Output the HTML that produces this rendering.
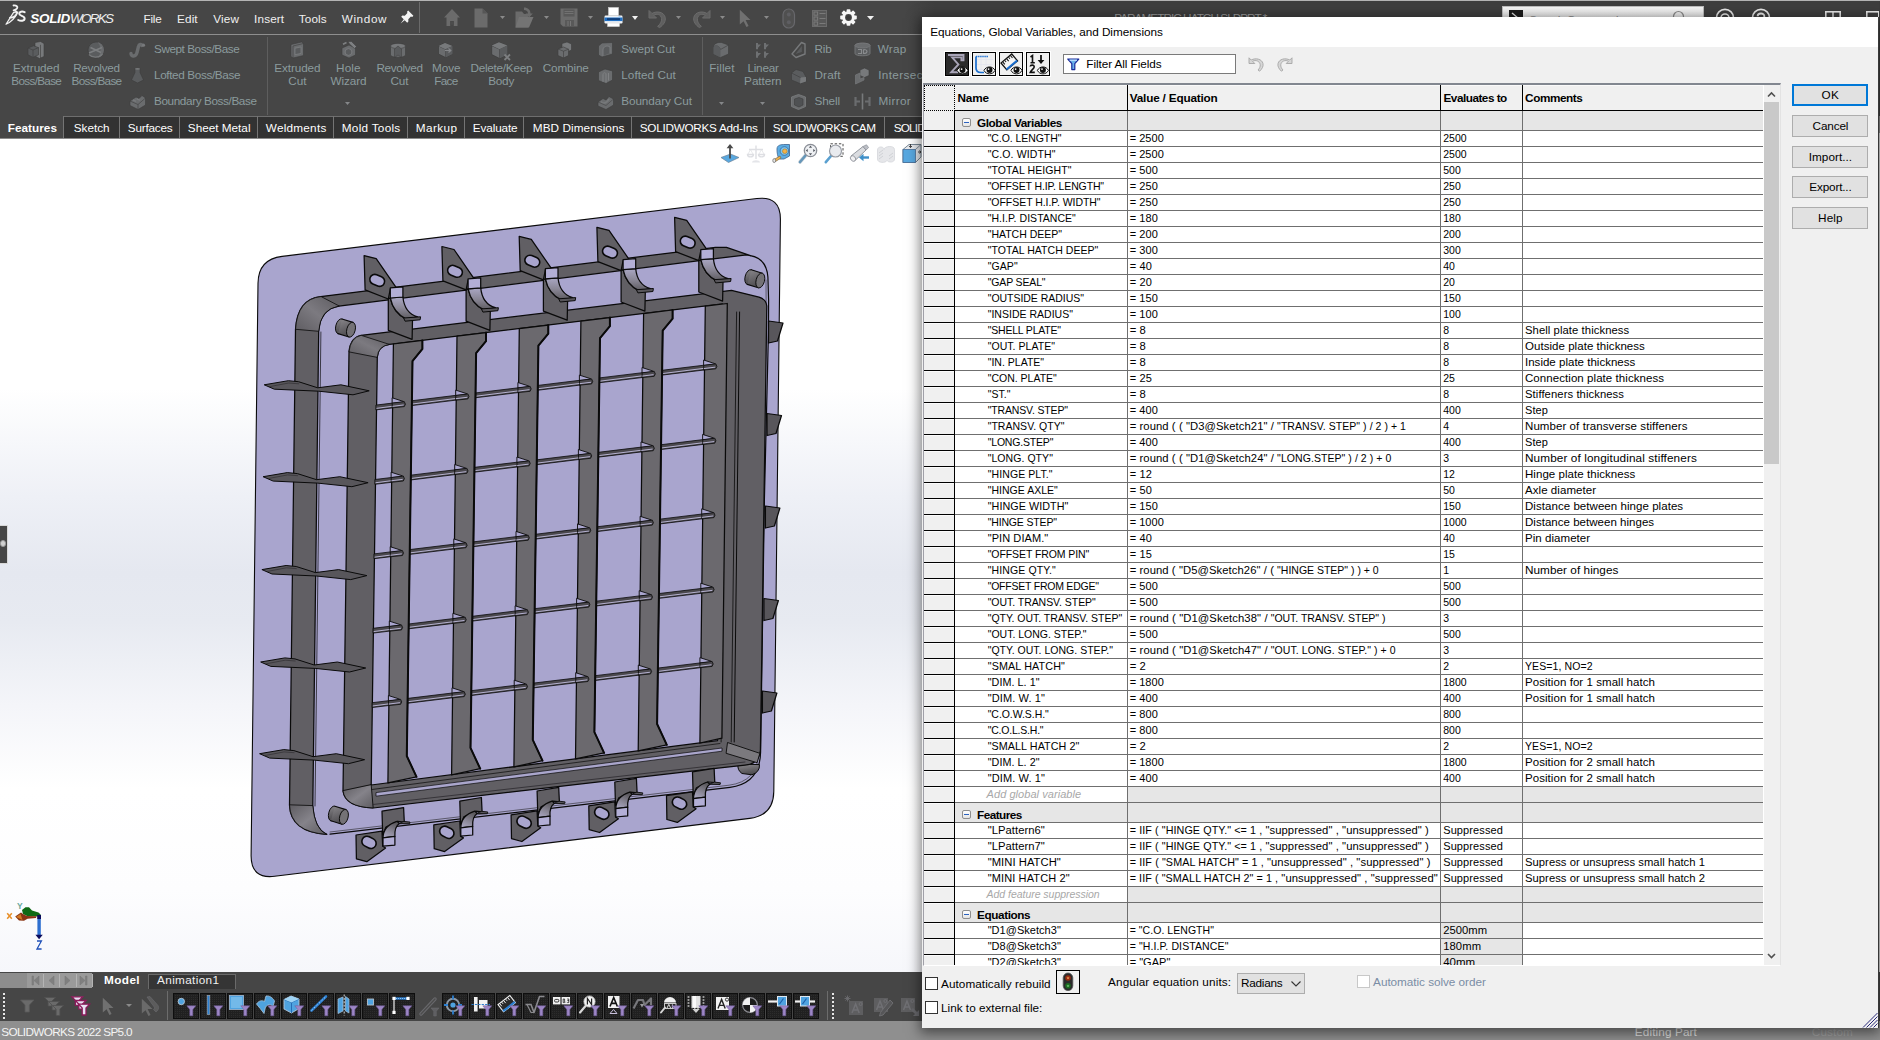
<!DOCTYPE html>
<html><head><meta charset="utf-8"><title>SOLIDWORKS</title><style>html,body{margin:0;padding:0}
body{width:1880px;height:1040px;overflow:hidden;position:relative;background:#464646;font-family:"Liberation Sans",sans-serif;}
.b{position:absolute;display:block}
.t{position:absolute;display:block;white-space:pre;line-height:1;font-family:"Liberation Sans",sans-serif;}
svg{overflow:visible}
</style></head><body>
<div class="b" style="left:0px;top:138px;width:1880px;height:835px;background:linear-gradient(to bottom,#ffffff 0%,#ffffff 30%,#eef0f6 43%,#e5e8f0 52%,#e7eaf1 58%,#f4f5f9 68%,#ffffff 78%,#fdfdfe 90%,#f6f7fb 100%);"></div>
<div class="b" style="left:0px;top:138px;width:1880px;height:1px;background:#8a8a8a;"></div>
<div class="b" style="left:0px;top:525px;width:8px;height:39px;background:#464646;border:1px solid #d8d8d8;border-left:none;box-sizing:border-box;"></div>
<div class="b" style="left:0px;top:540px;width:6px;height:7px;background:#d0d0d0;border-radius:4px;border:1px solid #9a9a9a;box-sizing:border-box;"></div>
<svg class="b" style="left:0;top:0" width="922" height="1040" viewBox="0 0 922 1040">
<defs>
<linearGradient id="armg" x1="0" y1="0" x2="0" y2="1"><stop offset="0" stop-color="#aaa7c4"/><stop offset="0.5" stop-color="#8a8796"/><stop offset="1" stop-color="#5c5a5f"/></linearGradient>
<linearGradient id="armg2" x1="0" y1="1" x2="0.5" y2="0"><stop offset="0" stop-color="#b0adca"/><stop offset="0.5" stop-color="#8a8796"/><stop offset="1" stop-color="#5c5a5f"/></linearGradient>
<linearGradient id="ping" x1="0" y1="0" x2="0.3" y2="1"><stop offset="0" stop-color="#8a888c"/><stop offset="0.5" stop-color="#6c6a6e"/><stop offset="1" stop-color="#4e4c50"/></linearGradient>
<linearGradient id="corng" x1="0" y1="1" x2="1" y2="0"><stop offset="0" stop-color="#5e5c61"/><stop offset="0.5" stop-color="#7c7a80"/><stop offset="1" stop-color="#5e5c61"/></linearGradient>
<linearGradient id="corng2" x1="0" y1="0" x2="1" y2="1"><stop offset="0" stop-color="#5e5c61"/><stop offset="0.5" stop-color="#85838a"/><stop offset="1" stop-color="#5e5c61"/></linearGradient>
</defs>
<path d="M258 283.3 Q258.3 259.3 282.1 256.4 L756.9 198.5 Q780.7 195.6 780.4 219.6 L773.8 791.5 Q773.5 815.5 749.7 818.4 L274.6 876.3 Q250.8 879.2 251.1 855.2 Z" fill="#a9a5ce" stroke="#0a0a0a" stroke-width="1.1" stroke-linejoin="round" stroke-linecap="round" />
<path d="M750.4 255.6 Q766.5 258.5 767.9 277 L768.6 300 L768.5 330 L764.4 500 L760.6 752 Q760 783.5 730 787.3 L330 834.2" fill="none" stroke="#0a0a0a" stroke-width="1.2" stroke-linejoin="round" stroke-linecap="round" />
<path d="M766 280 L766.3 330 L762.3 500 L758.6 752 Q758 781.5 729 785.2 L330 832" fill="none" stroke="#3a3840" stroke-width="0.7" stroke-linejoin="round" stroke-linecap="round" />
<path d="M320.7 296.6 Q297.5 299 295.5 329.3 L289.5 805.2 Q290.5 832 326.8 834.4 Q314.5 829 312.8 806 L318.7 331.3 Q320.2 309 338.9 306.1 L715.4 258.6 L746.5 254.9 L750.4 255.6 L726.5 247.4 L715.4 247.3 Z" fill="#615f64" stroke="#0a0a0a" stroke-width="1.25" stroke-linejoin="round" stroke-linecap="round" />
<path d="M320.7 296.6 Q297.5 299 295.5 329.3 L318.7 331.3 Q320.2 309 338.9 306.1 Z" fill="url(#corng)" stroke="#0a0a0a" stroke-width="0.8" stroke-linejoin="round" stroke-linecap="round" />
<path d="M289.5 805.2 Q290.5 832 326.8 834.4 Q314.5 829 312.8 806 Z" fill="url(#corng2)" stroke="#0a0a0a" stroke-width="0.8" stroke-linejoin="round" stroke-linecap="round" />
<polyline points="320.9,332 315,806" fill="none" stroke="#0a0a0a" stroke-width="0.7" stroke-linecap="round"/>
<path d="M738 764.5 Q737 770 742 773.5 L752 774.8 Q760 772 759.5 765 Z" fill="url(#ping)" stroke="#0a0a0a" stroke-width="1.0" stroke-linejoin="round" stroke-linecap="round" />
<path d="M349 351.5 Q350.5 337.5 361.1 335.3 L731.5 290.3 L759 297.2 Q766 299 766.8 306 L760.4 750.6 Q759 764 745 765.2 L718 768.1 L373.2 808 Q345 807 343 791 Z" fill="#615f64" stroke="#0a0a0a" stroke-width="1.25" stroke-linejoin="round" stroke-linecap="round" />
<path d="M377.3 357 Q378 346 389.4 344.4 L722.5 303.9 L717.5 740.7 L371.2 785 Z" fill="#a9a5ce" stroke="#0a0a0a" stroke-width="1.25" stroke-linejoin="round" stroke-linecap="round" />
<path d="M349 351.5 Q350.5 337.5 361.1 335.3 L389.4 344.4 Q378 346 377.3 357 Z" fill="url(#corng)" stroke="#0a0a0a" stroke-width="0.8" stroke-linejoin="round" stroke-linecap="round" />
<path d="M343 791 Q345 807 373.2 808 L371.2 785 Z" fill="url(#corng2)" stroke="#0a0a0a" stroke-width="0.9" stroke-linejoin="round" stroke-linecap="round" />
<polygon points="727.5,742.5 759.8,753.3 757.1,762.7 726.1,753.3" fill="#7b797e" stroke="#0a0a0a" stroke-width="0.9" stroke-linejoin="round" />
<polyline points="726.5,312 721.1,742" fill="none" stroke="#0a0a0a" stroke-width="0.8" stroke-linecap="round"/>
<polyline points="736.6,312 731.2,742" fill="none" stroke="#0a0a0a" stroke-width="0.8" stroke-linecap="round"/>
<polyline points="739.6,312 734.2,742" fill="none" stroke="#0a0a0a" stroke-width="1.0" stroke-linecap="round"/>
<polygon points="376,792.6 722,748 722,751.2 376,796.2" fill="#aaa6cc" stroke="#0a0a0a" stroke-width="0.7" stroke-linejoin="round" />
<polyline points="372,789.5 720,743.5" fill="none" stroke="#0a0a0a" stroke-width="0.7" stroke-linecap="round"/>
<polyline points="373,804.5 745,762" fill="none" stroke="#2c2a2e" stroke-width="0.8" stroke-linecap="round"/>
<polygon points="264.2,384.8 288.4,380.7 298.5,381.7 317.7,387.8 340.9,384.8 369.2,390.8 353,394.8 318.7,391.2 274.3,389.2" fill="#58565b" stroke="#0a0a0a" stroke-width="1.0" stroke-linejoin="round" />
<polyline points="269.7,386.6 288.7,383 298.7,383.8" fill="none" stroke="#2a282c" stroke-width="0.6" stroke-linecap="round"/>
<polygon points="263.1,476.7 287.3,472.6 297.4,473.6 316.6,479.7 339.8,476.7 368.1,482.7 351.9,486.7 317.6,483.1 273.2,481.1" fill="#58565b" stroke="#0a0a0a" stroke-width="1.0" stroke-linejoin="round" />
<polyline points="268.6,478.5 287.6,474.9 297.6,475.7" fill="none" stroke="#2a282c" stroke-width="0.6" stroke-linecap="round"/>
<polygon points="261.9,569.6 286.1,565.5 296.2,566.5 315.4,572.6 338.6,569.6 366.9,575.6 350.7,579.6 316.4,576 272,574" fill="#58565b" stroke="#0a0a0a" stroke-width="1.0" stroke-linejoin="round" />
<polyline points="267.4,571.4 286.4,567.8 296.4,568.6" fill="none" stroke="#2a282c" stroke-width="0.6" stroke-linecap="round"/>
<polygon points="260.7,662 284.9,657.9 295,658.9 314.2,665 337.4,662 365.7,668 349.5,672 315.2,668.4 270.8,666.4" fill="#58565b" stroke="#0a0a0a" stroke-width="1.0" stroke-linejoin="round" />
<polyline points="266.2,663.8 285.2,660.2 295.2,661" fill="none" stroke="#2a282c" stroke-width="0.6" stroke-linecap="round"/>
<polygon points="259.6,753.7 283.8,749.6 293.9,750.6 313.1,756.7 336.3,753.7 364.6,759.7 348.4,763.7 314.1,760.1 269.7,758.1" fill="#58565b" stroke="#0a0a0a" stroke-width="1.0" stroke-linejoin="round" />
<polyline points="265.1,755.5 284.1,751.9 294.1,752.7" fill="none" stroke="#2a282c" stroke-width="0.6" stroke-linecap="round"/>
<polygon points="375.9,405.1 404.8,401.6 405.6,404.1 404.8,406.4 375.9,409.9" fill="#4a484d" stroke="#0a0a0a" stroke-width="0.8" stroke-linejoin="round" />
<polyline points="376.9,408.3 403.8,404.8" fill="none" stroke="#b5b1d0" stroke-width="1.0" stroke-linecap="round"/>
<polygon points="409.8,401 468.4,393.8 469.2,396.3 468.4,398.6 409.8,405.8" fill="#4a484d" stroke="#0a0a0a" stroke-width="0.8" stroke-linejoin="round" />
<polyline points="410.8,404.2 467.4,397" fill="none" stroke="#b5b1d0" stroke-width="1.0" stroke-linecap="round"/>
<polygon points="473.4,393.2 530.6,386.3 531.4,388.8 530.6,391.1 473.4,398" fill="#4a484d" stroke="#0a0a0a" stroke-width="0.8" stroke-linejoin="round" />
<polyline points="474.4,396.4 529.6,389.5" fill="none" stroke="#b5b1d0" stroke-width="1.0" stroke-linecap="round"/>
<polygon points="535.6,385.7 592.1,378.8 592.9,381.3 592.1,383.6 535.6,390.5" fill="#4a484d" stroke="#0a0a0a" stroke-width="0.8" stroke-linejoin="round" />
<polyline points="536.6,388.9 591.1,382" fill="none" stroke="#b5b1d0" stroke-width="1.0" stroke-linecap="round"/>
<polygon points="597.1,378.2 654.7,371.2 655.5,373.7 654.7,376 597.1,383" fill="#4a484d" stroke="#0a0a0a" stroke-width="0.8" stroke-linejoin="round" />
<polyline points="598.1,381.4 653.7,374.4" fill="none" stroke="#b5b1d0" stroke-width="1.0" stroke-linecap="round"/>
<polygon points="659.7,370.6 716.3,363.7 717.1,366.2 716.3,368.5 659.7,375.4" fill="#4a484d" stroke="#0a0a0a" stroke-width="0.8" stroke-linejoin="round" />
<polyline points="660.7,373.8 715.3,366.9" fill="none" stroke="#b5b1d0" stroke-width="1.0" stroke-linecap="round"/>
<polygon points="374.9,479.5 403.8,476 404.6,478.5 403.8,480.8 374.9,484.3" fill="#4a484d" stroke="#0a0a0a" stroke-width="0.8" stroke-linejoin="round" />
<polyline points="375.9,482.7 402.8,479.2" fill="none" stroke="#b5b1d0" stroke-width="1.0" stroke-linecap="round"/>
<polygon points="408.8,475.4 467.4,468.3 468.2,470.8 467.4,473.1 408.8,480.2" fill="#4a484d" stroke="#0a0a0a" stroke-width="0.8" stroke-linejoin="round" />
<polyline points="409.8,478.6 466.4,471.5" fill="none" stroke="#b5b1d0" stroke-width="1.0" stroke-linecap="round"/>
<polygon points="472.4,467.6 529.6,460.7 530.4,463.2 529.6,465.5 472.4,472.4" fill="#4a484d" stroke="#0a0a0a" stroke-width="0.8" stroke-linejoin="round" />
<polyline points="473.4,470.8 528.6,463.9" fill="none" stroke="#b5b1d0" stroke-width="1.0" stroke-linecap="round"/>
<polygon points="534.6,460.1 591.1,453.2 591.9,455.7 591.1,458 534.6,464.9" fill="#4a484d" stroke="#0a0a0a" stroke-width="0.8" stroke-linejoin="round" />
<polyline points="535.6,463.3 590.1,456.4" fill="none" stroke="#b5b1d0" stroke-width="1.0" stroke-linecap="round"/>
<polygon points="596.1,452.6 653.7,445.6 654.5,448.1 653.7,450.4 596.1,457.4" fill="#4a484d" stroke="#0a0a0a" stroke-width="0.8" stroke-linejoin="round" />
<polyline points="597.1,455.8 652.7,448.8" fill="none" stroke="#b5b1d0" stroke-width="1.0" stroke-linecap="round"/>
<polygon points="658.7,445 715.3,438.1 716.1,440.6 715.3,442.9 658.7,449.8" fill="#4a484d" stroke="#0a0a0a" stroke-width="0.8" stroke-linejoin="round" />
<polyline points="659.7,448.2 714.3,441.3" fill="none" stroke="#b5b1d0" stroke-width="1.0" stroke-linecap="round"/>
<polygon points="374,553.9 402.9,550.4 403.7,552.9 402.9,555.2 374,558.7" fill="#4a484d" stroke="#0a0a0a" stroke-width="0.8" stroke-linejoin="round" />
<polyline points="375,557.1 401.9,553.6" fill="none" stroke="#b5b1d0" stroke-width="1.0" stroke-linecap="round"/>
<polygon points="407.9,549.8 466.5,542.7 467.3,545.2 466.5,547.5 407.9,554.6" fill="#4a484d" stroke="#0a0a0a" stroke-width="0.8" stroke-linejoin="round" />
<polyline points="408.9,553 465.5,545.9" fill="none" stroke="#b5b1d0" stroke-width="1.0" stroke-linecap="round"/>
<polygon points="471.5,542.1 528.7,535.1 529.5,537.6 528.7,539.9 471.5,546.9" fill="#4a484d" stroke="#0a0a0a" stroke-width="0.8" stroke-linejoin="round" />
<polyline points="472.5,545.3 527.7,538.3" fill="none" stroke="#b5b1d0" stroke-width="1.0" stroke-linecap="round"/>
<polygon points="533.7,534.5 590.2,527.6 591,530.1 590.2,532.4 533.7,539.3" fill="#4a484d" stroke="#0a0a0a" stroke-width="0.8" stroke-linejoin="round" />
<polyline points="534.7,537.7 589.2,530.8" fill="none" stroke="#b5b1d0" stroke-width="1.0" stroke-linecap="round"/>
<polygon points="595.2,527 652.8,520 653.6,522.5 652.8,524.8 595.2,531.8" fill="#4a484d" stroke="#0a0a0a" stroke-width="0.8" stroke-linejoin="round" />
<polyline points="596.2,530.2 651.8,523.2" fill="none" stroke="#b5b1d0" stroke-width="1.0" stroke-linecap="round"/>
<polygon points="657.8,519.4 714.4,512.5 715.2,515 714.4,517.3 657.8,524.2" fill="#4a484d" stroke="#0a0a0a" stroke-width="0.8" stroke-linejoin="round" />
<polyline points="658.8,522.6 713.4,515.7" fill="none" stroke="#b5b1d0" stroke-width="1.0" stroke-linecap="round"/>
<polygon points="373.1,628.3 402,624.8 402.8,627.3 402,629.6 373.1,633.1" fill="#4a484d" stroke="#0a0a0a" stroke-width="0.8" stroke-linejoin="round" />
<polyline points="374.1,631.5 401,628" fill="none" stroke="#b5b1d0" stroke-width="1.0" stroke-linecap="round"/>
<polygon points="407,624.2 465.6,617.1 466.4,619.6 465.6,621.9 407,629" fill="#4a484d" stroke="#0a0a0a" stroke-width="0.8" stroke-linejoin="round" />
<polyline points="408,627.4 464.6,620.3" fill="none" stroke="#b5b1d0" stroke-width="1.0" stroke-linecap="round"/>
<polygon points="470.6,616.5 527.8,609.5 528.6,612 527.8,614.3 470.6,621.3" fill="#4a484d" stroke="#0a0a0a" stroke-width="0.8" stroke-linejoin="round" />
<polyline points="471.6,619.7 526.8,612.7" fill="none" stroke="#b5b1d0" stroke-width="1.0" stroke-linecap="round"/>
<polygon points="532.8,608.9 589.3,602.1 590.1,604.6 589.3,606.9 532.8,613.7" fill="#4a484d" stroke="#0a0a0a" stroke-width="0.8" stroke-linejoin="round" />
<polyline points="533.8,612.1 588.3,605.3" fill="none" stroke="#b5b1d0" stroke-width="1.0" stroke-linecap="round"/>
<polygon points="594.3,601.4 651.9,594.4 652.7,596.9 651.9,599.2 594.3,606.2" fill="#4a484d" stroke="#0a0a0a" stroke-width="0.8" stroke-linejoin="round" />
<polyline points="595.3,604.6 650.9,597.6" fill="none" stroke="#b5b1d0" stroke-width="1.0" stroke-linecap="round"/>
<polygon points="656.9,593.8 713.5,587 714.3,589.5 713.5,591.8 656.9,598.6" fill="#4a484d" stroke="#0a0a0a" stroke-width="0.8" stroke-linejoin="round" />
<polyline points="657.9,597 712.5,590.2" fill="none" stroke="#b5b1d0" stroke-width="1.0" stroke-linecap="round"/>
<polygon points="372.2,702.7 401.1,699.2 401.9,701.7 401.1,704 372.2,707.5" fill="#4a484d" stroke="#0a0a0a" stroke-width="0.8" stroke-linejoin="round" />
<polyline points="373.2,705.9 400.1,702.4" fill="none" stroke="#b5b1d0" stroke-width="1.0" stroke-linecap="round"/>
<polygon points="406.1,698.6 464.7,691.5 465.5,694 464.7,696.3 406.1,703.4" fill="#4a484d" stroke="#0a0a0a" stroke-width="0.8" stroke-linejoin="round" />
<polyline points="407.1,701.8 463.7,694.7" fill="none" stroke="#b5b1d0" stroke-width="1.0" stroke-linecap="round"/>
<polygon points="469.7,690.9 526.9,683.9 527.7,686.4 526.9,688.7 469.7,695.7" fill="#4a484d" stroke="#0a0a0a" stroke-width="0.8" stroke-linejoin="round" />
<polyline points="470.7,694.1 525.9,687.1" fill="none" stroke="#b5b1d0" stroke-width="1.0" stroke-linecap="round"/>
<polygon points="531.9,683.3 588.4,676.5 589.2,679 588.4,681.3 531.9,688.1" fill="#4a484d" stroke="#0a0a0a" stroke-width="0.8" stroke-linejoin="round" />
<polyline points="532.9,686.5 587.4,679.7" fill="none" stroke="#b5b1d0" stroke-width="1.0" stroke-linecap="round"/>
<polygon points="593.4,675.9 651,668.9 651.8,671.4 651,673.7 593.4,680.7" fill="#4a484d" stroke="#0a0a0a" stroke-width="0.8" stroke-linejoin="round" />
<polyline points="594.4,679.1 650,672.1" fill="none" stroke="#b5b1d0" stroke-width="1.0" stroke-linecap="round"/>
<polygon points="656,668.3 712.6,661.4 713.4,663.9 712.6,666.2 656,673.1" fill="#4a484d" stroke="#0a0a0a" stroke-width="0.8" stroke-linejoin="round" />
<polyline points="657,671.5 711.6,664.6" fill="none" stroke="#b5b1d0" stroke-width="1.0" stroke-linecap="round"/>
<polygon points="393.4,344 422.4,340.4 422.4,349 412.5,361 406.8,756 416.5,776.8 387.9,782.9" fill="#6b696e" stroke="#0a0a0a" stroke-width="1.25" stroke-linejoin="round" />
<polyline points="422.4,340.4 422.4,349 412.5,361 406.8,756 416.5,776.8" fill="none" stroke="#0a0a0a" stroke-width="2.0" stroke-linecap="round"/>
<polygon points="392.1,397.8 403.3,401.4 403.3,402 392.1,403.3" fill="#a9a5ce" stroke="#0a0a0a" stroke-width="0.9" stroke-linejoin="round" />
<polygon points="392.2,403.1 404.3,401.6 405.4,404.2 404.3,406.6 392.2,407.9" fill="#4a484d" stroke="#0a0a0a" stroke-width="0.8" stroke-linejoin="round" />
<polyline points="392.8,406.3 403.3,405" fill="none" stroke="#b5b1d0" stroke-width="1.0" stroke-linecap="round"/>
<polygon points="391.1,472.2 402.3,475.8 402.3,476.4 391.1,477.7" fill="#a9a5ce" stroke="#0a0a0a" stroke-width="0.9" stroke-linejoin="round" />
<polygon points="391.2,477.5 403.3,476 404.4,478.6 403.3,481 391.2,482.3" fill="#4a484d" stroke="#0a0a0a" stroke-width="0.8" stroke-linejoin="round" />
<polyline points="391.8,480.7 402.3,479.4" fill="none" stroke="#b5b1d0" stroke-width="1.0" stroke-linecap="round"/>
<polygon points="390.2,546.7 401.4,550.3 401.4,550.9 390.2,552.2" fill="#a9a5ce" stroke="#0a0a0a" stroke-width="0.9" stroke-linejoin="round" />
<polygon points="390.3,552 402.4,550.5 403.5,553.1 402.4,555.5 390.3,556.8" fill="#4a484d" stroke="#0a0a0a" stroke-width="0.8" stroke-linejoin="round" />
<polyline points="390.9,555.2 401.4,553.9" fill="none" stroke="#b5b1d0" stroke-width="1.0" stroke-linecap="round"/>
<polygon points="389.3,621.1 400.5,624.7 400.5,625.3 389.3,626.6" fill="#a9a5ce" stroke="#0a0a0a" stroke-width="0.9" stroke-linejoin="round" />
<polygon points="389.4,626.4 401.5,624.9 402.6,627.5 401.5,629.9 389.4,631.2" fill="#4a484d" stroke="#0a0a0a" stroke-width="0.8" stroke-linejoin="round" />
<polyline points="390,629.6 400.5,628.3" fill="none" stroke="#b5b1d0" stroke-width="1.0" stroke-linecap="round"/>
<polygon points="388.4,695.5 399.6,699.1 399.6,699.7 388.4,701" fill="#a9a5ce" stroke="#0a0a0a" stroke-width="0.9" stroke-linejoin="round" />
<polygon points="388.5,700.8 400.6,699.3 401.7,701.9 400.6,704.3 388.5,705.6" fill="#4a484d" stroke="#0a0a0a" stroke-width="0.8" stroke-linejoin="round" />
<polyline points="389.1,704 399.6,702.7" fill="none" stroke="#b5b1d0" stroke-width="1.0" stroke-linecap="round"/>
<polygon points="457,336.2 486,332.6 486,341.2 476.1,353.2 470.5,747.9 480.2,768.7 451.6,774.8" fill="#6b696e" stroke="#0a0a0a" stroke-width="1.25" stroke-linejoin="round" />
<polyline points="486,332.6 486,341.2 476.1,353.2 470.5,747.9 480.2,768.7" fill="none" stroke="#0a0a0a" stroke-width="2.0" stroke-linecap="round"/>
<polygon points="455.7,390.1 466.9,393.7 466.9,394.3 455.7,395.6" fill="#a9a5ce" stroke="#0a0a0a" stroke-width="0.9" stroke-linejoin="round" />
<polygon points="455.8,395.4 467.9,393.9 469,396.5 467.9,398.9 455.8,400.2" fill="#4a484d" stroke="#0a0a0a" stroke-width="0.8" stroke-linejoin="round" />
<polyline points="456.4,398.6 466.9,397.3" fill="none" stroke="#b5b1d0" stroke-width="1.0" stroke-linecap="round"/>
<polygon points="454.7,464.5 465.9,468.1 465.9,468.7 454.7,470" fill="#a9a5ce" stroke="#0a0a0a" stroke-width="0.9" stroke-linejoin="round" />
<polygon points="454.8,469.8 466.9,468.3 468,470.9 466.9,473.3 454.8,474.6" fill="#4a484d" stroke="#0a0a0a" stroke-width="0.8" stroke-linejoin="round" />
<polyline points="455.4,473 465.9,471.7" fill="none" stroke="#b5b1d0" stroke-width="1.0" stroke-linecap="round"/>
<polygon points="453.8,538.9 465,542.5 465,543.1 453.8,544.4" fill="#a9a5ce" stroke="#0a0a0a" stroke-width="0.9" stroke-linejoin="round" />
<polygon points="453.9,544.2 466,542.7 467.1,545.3 466,547.7 453.9,549" fill="#4a484d" stroke="#0a0a0a" stroke-width="0.8" stroke-linejoin="round" />
<polyline points="454.5,547.4 465,546.1" fill="none" stroke="#b5b1d0" stroke-width="1.0" stroke-linecap="round"/>
<polygon points="452.9,613.3 464.1,616.9 464.1,617.5 452.9,618.8" fill="#a9a5ce" stroke="#0a0a0a" stroke-width="0.9" stroke-linejoin="round" />
<polygon points="453,618.6 465.1,617.1 466.2,619.7 465.1,622.1 453,623.4" fill="#4a484d" stroke="#0a0a0a" stroke-width="0.8" stroke-linejoin="round" />
<polyline points="453.6,621.8 464.1,620.5" fill="none" stroke="#b5b1d0" stroke-width="1.0" stroke-linecap="round"/>
<polygon points="452,687.8 463.2,691.4 463.2,692 452,693.3" fill="#a9a5ce" stroke="#0a0a0a" stroke-width="0.9" stroke-linejoin="round" />
<polygon points="452.1,693.1 464.2,691.6 465.3,694.2 464.2,696.6 452.1,697.9" fill="#4a484d" stroke="#0a0a0a" stroke-width="0.8" stroke-linejoin="round" />
<polyline points="452.7,696.3 463.2,695" fill="none" stroke="#b5b1d0" stroke-width="1.0" stroke-linecap="round"/>
<polygon points="519.3,328.7 548.3,325.1 548.3,333.7 538.4,345.7 532.8,739.9 542.5,760.7 513.9,766.8" fill="#6b696e" stroke="#0a0a0a" stroke-width="1.25" stroke-linejoin="round" />
<polyline points="548.3,325.1 548.3,333.7 538.4,345.7 532.8,739.9 542.5,760.7" fill="none" stroke="#0a0a0a" stroke-width="2.0" stroke-linecap="round"/>
<polygon points="517.9,382.5 529.1,386.1 529.1,386.7 517.9,388" fill="#a9a5ce" stroke="#0a0a0a" stroke-width="0.9" stroke-linejoin="round" />
<polygon points="518,387.8 530.1,386.3 531.2,388.9 530.1,391.3 518,392.6" fill="#4a484d" stroke="#0a0a0a" stroke-width="0.8" stroke-linejoin="round" />
<polyline points="518.6,391 529.1,389.7" fill="none" stroke="#b5b1d0" stroke-width="1.0" stroke-linecap="round"/>
<polygon points="516.9,457 528.1,460.6 528.1,461.2 516.9,462.5" fill="#a9a5ce" stroke="#0a0a0a" stroke-width="0.9" stroke-linejoin="round" />
<polygon points="517,462.3 529.1,460.8 530.2,463.4 529.1,465.8 517,467.1" fill="#4a484d" stroke="#0a0a0a" stroke-width="0.8" stroke-linejoin="round" />
<polyline points="517.6,465.5 528.1,464.2" fill="none" stroke="#b5b1d0" stroke-width="1.0" stroke-linecap="round"/>
<polygon points="516,531.4 527.2,535 527.2,535.6 516,536.9" fill="#a9a5ce" stroke="#0a0a0a" stroke-width="0.9" stroke-linejoin="round" />
<polygon points="516.1,536.7 528.2,535.2 529.3,537.8 528.2,540.2 516.1,541.5" fill="#4a484d" stroke="#0a0a0a" stroke-width="0.8" stroke-linejoin="round" />
<polyline points="516.7,539.9 527.2,538.6" fill="none" stroke="#b5b1d0" stroke-width="1.0" stroke-linecap="round"/>
<polygon points="515.1,605.8 526.3,609.4 526.3,610 515.1,611.3" fill="#a9a5ce" stroke="#0a0a0a" stroke-width="0.9" stroke-linejoin="round" />
<polygon points="515.2,611.1 527.3,609.6 528.4,612.2 527.3,614.6 515.2,615.9" fill="#4a484d" stroke="#0a0a0a" stroke-width="0.8" stroke-linejoin="round" />
<polyline points="515.8,614.3 526.3,613" fill="none" stroke="#b5b1d0" stroke-width="1.0" stroke-linecap="round"/>
<polygon points="514.2,680.2 525.4,683.8 525.4,684.4 514.2,685.7" fill="#a9a5ce" stroke="#0a0a0a" stroke-width="0.9" stroke-linejoin="round" />
<polygon points="514.3,685.5 526.4,684 527.5,686.6 526.4,689 514.3,690.3" fill="#4a484d" stroke="#0a0a0a" stroke-width="0.8" stroke-linejoin="round" />
<polyline points="514.9,688.7 525.4,687.4" fill="none" stroke="#b5b1d0" stroke-width="1.0" stroke-linecap="round"/>
<polygon points="580.9,321.2 609.9,317.6 609.9,326.2 600,338.2 594.4,732.1 604.1,752.9 575.5,758.9" fill="#6b696e" stroke="#0a0a0a" stroke-width="1.25" stroke-linejoin="round" />
<polyline points="609.9,317.6 609.9,326.2 600,338.2 594.4,732.1 604.1,752.9" fill="none" stroke="#0a0a0a" stroke-width="2.0" stroke-linecap="round"/>
<polygon points="579.4,375.1 590.6,378.7 590.6,379.3 579.4,380.6" fill="#a9a5ce" stroke="#0a0a0a" stroke-width="0.9" stroke-linejoin="round" />
<polygon points="579.5,380.4 591.6,378.9 592.7,381.5 591.6,383.9 579.5,385.2" fill="#4a484d" stroke="#0a0a0a" stroke-width="0.8" stroke-linejoin="round" />
<polyline points="580.1,383.6 590.6,382.3" fill="none" stroke="#b5b1d0" stroke-width="1.0" stroke-linecap="round"/>
<polygon points="578.4,449.5 589.6,453.1 589.6,453.7 578.4,455" fill="#a9a5ce" stroke="#0a0a0a" stroke-width="0.9" stroke-linejoin="round" />
<polygon points="578.5,454.8 590.6,453.3 591.7,455.9 590.6,458.3 578.5,459.6" fill="#4a484d" stroke="#0a0a0a" stroke-width="0.8" stroke-linejoin="round" />
<polyline points="579.1,458 589.6,456.7" fill="none" stroke="#b5b1d0" stroke-width="1.0" stroke-linecap="round"/>
<polygon points="577.5,523.9 588.7,527.5 588.7,528.1 577.5,529.4" fill="#a9a5ce" stroke="#0a0a0a" stroke-width="0.9" stroke-linejoin="round" />
<polygon points="577.6,529.2 589.7,527.7 590.8,530.3 589.7,532.7 577.6,534" fill="#4a484d" stroke="#0a0a0a" stroke-width="0.8" stroke-linejoin="round" />
<polyline points="578.2,532.4 588.7,531.1" fill="none" stroke="#b5b1d0" stroke-width="1.0" stroke-linecap="round"/>
<polygon points="576.6,598.3 587.8,601.9 587.8,602.5 576.6,603.8" fill="#a9a5ce" stroke="#0a0a0a" stroke-width="0.9" stroke-linejoin="round" />
<polygon points="576.7,603.6 588.8,602.1 589.9,604.7 588.8,607.1 576.7,608.4" fill="#4a484d" stroke="#0a0a0a" stroke-width="0.8" stroke-linejoin="round" />
<polyline points="577.3,606.8 587.8,605.5" fill="none" stroke="#b5b1d0" stroke-width="1.0" stroke-linecap="round"/>
<polygon points="575.7,672.7 586.9,676.3 586.9,676.9 575.7,678.2" fill="#a9a5ce" stroke="#0a0a0a" stroke-width="0.9" stroke-linejoin="round" />
<polygon points="575.8,678 587.9,676.5 589,679.1 587.9,681.5 575.8,682.8" fill="#4a484d" stroke="#0a0a0a" stroke-width="0.8" stroke-linejoin="round" />
<polyline points="576.4,681.2 586.9,679.9" fill="none" stroke="#b5b1d0" stroke-width="1.0" stroke-linecap="round"/>
<polygon points="643.6,313.6 672.6,310 672.6,318.6 662.7,330.6 657.1,724 666.8,744.8 638.2,750.9" fill="#6b696e" stroke="#0a0a0a" stroke-width="1.25" stroke-linejoin="round" />
<polyline points="672.6,310 672.6,318.6 662.7,330.6 657.1,724 666.8,744.8" fill="none" stroke="#0a0a0a" stroke-width="2.0" stroke-linecap="round"/>
<polygon points="642,367.5 653.2,371.1 653.2,371.7 642,373" fill="#a9a5ce" stroke="#0a0a0a" stroke-width="0.9" stroke-linejoin="round" />
<polygon points="642.1,372.8 654.2,371.3 655.3,373.9 654.2,376.3 642.1,377.6" fill="#4a484d" stroke="#0a0a0a" stroke-width="0.8" stroke-linejoin="round" />
<polyline points="642.7,376 653.2,374.7" fill="none" stroke="#b5b1d0" stroke-width="1.0" stroke-linecap="round"/>
<polygon points="641,441.9 652.2,445.5 652.2,446.1 641,447.4" fill="#a9a5ce" stroke="#0a0a0a" stroke-width="0.9" stroke-linejoin="round" />
<polygon points="641.1,447.2 653.2,445.7 654.3,448.3 653.2,450.7 641.1,452" fill="#4a484d" stroke="#0a0a0a" stroke-width="0.8" stroke-linejoin="round" />
<polyline points="641.7,450.4 652.2,449.1" fill="none" stroke="#b5b1d0" stroke-width="1.0" stroke-linecap="round"/>
<polygon points="640.1,516.3 651.3,519.9 651.3,520.5 640.1,521.8" fill="#a9a5ce" stroke="#0a0a0a" stroke-width="0.9" stroke-linejoin="round" />
<polygon points="640.2,521.6 652.3,520.1 653.4,522.7 652.3,525.1 640.2,526.4" fill="#4a484d" stroke="#0a0a0a" stroke-width="0.8" stroke-linejoin="round" />
<polyline points="640.8,524.8 651.3,523.5" fill="none" stroke="#b5b1d0" stroke-width="1.0" stroke-linecap="round"/>
<polygon points="639.2,590.7 650.4,594.3 650.4,594.9 639.2,596.2" fill="#a9a5ce" stroke="#0a0a0a" stroke-width="0.9" stroke-linejoin="round" />
<polygon points="639.3,596 651.4,594.5 652.5,597.1 651.4,599.5 639.3,600.8" fill="#4a484d" stroke="#0a0a0a" stroke-width="0.8" stroke-linejoin="round" />
<polyline points="639.9,599.2 650.4,597.9" fill="none" stroke="#b5b1d0" stroke-width="1.0" stroke-linecap="round"/>
<polygon points="638.3,665.1 649.5,668.7 649.5,669.3 638.3,670.6" fill="#a9a5ce" stroke="#0a0a0a" stroke-width="0.9" stroke-linejoin="round" />
<polygon points="638.4,670.4 650.5,668.9 651.6,671.5 650.5,673.9 638.4,675.2" fill="#4a484d" stroke="#0a0a0a" stroke-width="0.8" stroke-linejoin="round" />
<polyline points="639,673.6 649.5,672.3" fill="none" stroke="#b5b1d0" stroke-width="1.0" stroke-linecap="round"/>
<polygon points="705.3,306.1 727.3,303.5 721.9,738.2 699.9,743" fill="#6b696e" stroke="#0a0a0a" stroke-width="1.25" stroke-linejoin="round" />
<polygon points="703.6,360 714.8,363.6 714.8,364.2 703.6,365.5" fill="#a9a5ce" stroke="#0a0a0a" stroke-width="0.9" stroke-linejoin="round" />
<polygon points="703.7,365.3 715.8,363.8 716.9,366.4 715.8,368.8 703.7,370.1" fill="#4a484d" stroke="#0a0a0a" stroke-width="0.8" stroke-linejoin="round" />
<polyline points="704.3,368.5 714.8,367.2" fill="none" stroke="#b5b1d0" stroke-width="1.0" stroke-linecap="round"/>
<polygon points="702.6,434.4 713.8,438 713.8,438.6 702.6,439.9" fill="#a9a5ce" stroke="#0a0a0a" stroke-width="0.9" stroke-linejoin="round" />
<polygon points="702.7,439.7 714.8,438.2 715.9,440.8 714.8,443.2 702.7,444.5" fill="#4a484d" stroke="#0a0a0a" stroke-width="0.8" stroke-linejoin="round" />
<polyline points="703.3,442.9 713.8,441.6" fill="none" stroke="#b5b1d0" stroke-width="1.0" stroke-linecap="round"/>
<polygon points="701.7,508.8 712.9,512.4 712.9,513 701.7,514.3" fill="#a9a5ce" stroke="#0a0a0a" stroke-width="0.9" stroke-linejoin="round" />
<polygon points="701.8,514.1 713.9,512.6 715,515.2 713.9,517.6 701.8,518.9" fill="#4a484d" stroke="#0a0a0a" stroke-width="0.8" stroke-linejoin="round" />
<polyline points="702.4,517.3 712.9,516" fill="none" stroke="#b5b1d0" stroke-width="1.0" stroke-linecap="round"/>
<polygon points="700.8,583.2 712,586.8 712,587.4 700.8,588.7" fill="#a9a5ce" stroke="#0a0a0a" stroke-width="0.9" stroke-linejoin="round" />
<polygon points="700.9,588.5 713,587 714.1,589.6 713,592 700.9,593.3" fill="#4a484d" stroke="#0a0a0a" stroke-width="0.8" stroke-linejoin="round" />
<polyline points="701.5,591.7 712,590.4" fill="none" stroke="#b5b1d0" stroke-width="1.0" stroke-linecap="round"/>
<polygon points="699.9,657.6 711.1,661.2 711.1,661.8 699.9,663.1" fill="#a9a5ce" stroke="#0a0a0a" stroke-width="0.9" stroke-linejoin="round" />
<polygon points="700,662.9 712.1,661.4 713.2,664 712.1,666.4 700,667.7" fill="#4a484d" stroke="#0a0a0a" stroke-width="0.8" stroke-linejoin="round" />
<polyline points="700.6,666.1 711.1,664.8" fill="none" stroke="#b5b1d0" stroke-width="1.0" stroke-linecap="round"/>
<polygon points="768.5,321 783,323 777.5,341 768.5,343" fill="#58565b" stroke="#0a0a0a" stroke-width="1.25" stroke-linejoin="round" />
<polygon points="767,413.5 781.5,415.5 776,433.5 767,435.5" fill="#58565b" stroke="#0a0a0a" stroke-width="1.25" stroke-linejoin="round" />
<polygon points="765.4,506 779.9,508 774.4,526 765.4,528" fill="#58565b" stroke="#0a0a0a" stroke-width="1.25" stroke-linejoin="round" />
<polygon points="763.9,598.5 778.4,600.5 772.9,618.5 763.9,620.5" fill="#58565b" stroke="#0a0a0a" stroke-width="1.25" stroke-linejoin="round" />
<polygon points="762.4,691 776.9,693 771.4,711 762.4,713" fill="#58565b" stroke="#0a0a0a" stroke-width="1.25" stroke-linejoin="round" />
<ellipse cx="340" cy="326.3" rx="4.2" ry="7.6" transform="rotate(15 340 326.3)" fill="url(#ping)" stroke="#0a0a0a" stroke-width="0.9"/>
<polygon points="342,319 353,322.4 349,337 338,333.6" fill="url(#ping)" stroke="none" stroke-width="1.25" stroke-linejoin="round" />
<polyline points="342,319 353,322.4" fill="none" stroke="#0a0a0a" stroke-width="1.1" stroke-linecap="round"/>
<polyline points="338,333.6 349,337" fill="none" stroke="#0a0a0a" stroke-width="1.1" stroke-linecap="round"/>
<ellipse cx="351" cy="329.7" rx="4.2" ry="7.6" transform="rotate(15 351 329.7)" fill="#747276" stroke="#0a0a0a" stroke-width="0.9"/>
<ellipse cx="749.3" cy="277.1" rx="4.2" ry="7.6" transform="rotate(15 749.3 277.1)" fill="url(#ping)" stroke="#0a0a0a" stroke-width="0.9"/>
<polygon points="751.3,269.8 762.3,273.2 758.3,287.8 747.3,284.4" fill="url(#ping)" stroke="none" stroke-width="1.25" stroke-linejoin="round" />
<polyline points="751.3,269.8 762.3,273.2" fill="none" stroke="#0a0a0a" stroke-width="1.1" stroke-linecap="round"/>
<polyline points="747.3,284.4 758.3,287.8" fill="none" stroke="#0a0a0a" stroke-width="1.1" stroke-linecap="round"/>
<ellipse cx="760.3" cy="280.5" rx="4.2" ry="7.6" transform="rotate(15 760.3 280.5)" fill="#747276" stroke="#0a0a0a" stroke-width="0.9"/>
<ellipse cx="332.9" cy="813.5" rx="4.2" ry="7.6" transform="rotate(15 332.9 813.5)" fill="url(#ping)" stroke="#0a0a0a" stroke-width="0.9"/>
<polygon points="334.9,806.2 345.9,809.6 341.9,824.2 330.9,820.8" fill="url(#ping)" stroke="none" stroke-width="1.25" stroke-linejoin="round" />
<polyline points="334.9,806.2 345.9,809.6" fill="none" stroke="#0a0a0a" stroke-width="1.1" stroke-linecap="round"/>
<polyline points="330.9,820.8 341.9,824.2" fill="none" stroke="#0a0a0a" stroke-width="1.1" stroke-linecap="round"/>
<ellipse cx="343.9" cy="816.9" rx="4.2" ry="7.6" transform="rotate(15 343.9 816.9)" fill="#747276" stroke="#0a0a0a" stroke-width="0.9"/>
<path d="M388.3 299 L388.3 330.3 L412.1 339.4 L412.5 320.2 L406.5 319.2 Q393.4 313.1 390.3 298 Z" fill="#615f64" stroke="#0a0a0a" stroke-width="1.25" stroke-linejoin="round" stroke-linecap="round" />
<polygon points="364.1,255.6 376.2,258.6 396.4,287.9 390.3,288.9 388.3,299 365.1,289.9" fill="#615f64" stroke="#0a0a0a" stroke-width="1.25" stroke-linejoin="round" />
<rect x="369.6" y="275.4" width="15.2" height="10" rx="5" transform="rotate(22 377.2 280.4)" fill="#a9a5ce" stroke="#0a0a0a" stroke-width="1.6"/>
<path d="M390.3 298 L402.9 297 Q404.5 313.1 417.6 316.8 L406.5 319.2 Q393.4 313.1 390.3 298 Z" fill="url(#armg)" stroke="#0a0a0a" stroke-width="1.25" stroke-linejoin="round" stroke-linecap="round" />
<polygon points="390.3,287.9 402.9,286.9 402.9,297 390.3,298" fill="#b3afd6" stroke="#0a0a0a" stroke-width="1.25" stroke-linejoin="round" />
<polygon points="403.6,318 420.6,316.8 420.1,319.8 405.1,321.2" fill="#58565b" stroke="#0a0a0a" stroke-width="1.0" stroke-linejoin="round" />
<path d="M466.1 289.9 L466.1 321.2 L489.9 330.3 L490.3 311.1 L484.3 310.1 Q471.2 304 468.1 288.9 Z" fill="#615f64" stroke="#0a0a0a" stroke-width="1.25" stroke-linejoin="round" stroke-linecap="round" />
<polygon points="441.9,246.5 454,249.5 474.2,278.8 468.1,279.8 466.1,289.9 442.9,280.8" fill="#615f64" stroke="#0a0a0a" stroke-width="1.25" stroke-linejoin="round" />
<rect x="447.4" y="266.3" width="15.2" height="10" rx="5" transform="rotate(22 455 271.3)" fill="#a9a5ce" stroke="#0a0a0a" stroke-width="1.6"/>
<path d="M468.1 288.9 L480.7 287.9 Q482.3 304 495.4 307.7 L484.3 310.1 Q471.2 304 468.1 288.9 Z" fill="url(#armg)" stroke="#0a0a0a" stroke-width="1.25" stroke-linejoin="round" stroke-linecap="round" />
<polygon points="468.1,278.8 480.7,277.8 480.7,287.9 468.1,288.9" fill="#b3afd6" stroke="#0a0a0a" stroke-width="1.25" stroke-linejoin="round" />
<polygon points="481.4,308.9 498.4,307.7 497.9,310.7 482.9,312.1" fill="#58565b" stroke="#0a0a0a" stroke-width="1.0" stroke-linejoin="round" />
<path d="M543.4 279.8 L543.4 311.1 L567.2 320.2 L567.6 301 L561.6 300 Q548.5 293.9 545.4 278.8 Z" fill="#615f64" stroke="#0a0a0a" stroke-width="1.25" stroke-linejoin="round" stroke-linecap="round" />
<polygon points="519.2,236.4 531.3,239.4 551.5,268.7 545.4,269.7 543.4,279.8 520.2,270.7" fill="#615f64" stroke="#0a0a0a" stroke-width="1.25" stroke-linejoin="round" />
<rect x="524.7" y="256.2" width="15.2" height="10" rx="5" transform="rotate(22 532.3 261.2)" fill="#a9a5ce" stroke="#0a0a0a" stroke-width="1.6"/>
<path d="M545.4 278.8 L558 277.8 Q559.6 293.9 572.7 297.6 L561.6 300 Q548.5 293.9 545.4 278.8 Z" fill="url(#armg)" stroke="#0a0a0a" stroke-width="1.25" stroke-linejoin="round" stroke-linecap="round" />
<polygon points="545.4,268.7 558,267.7 558,277.8 545.4,278.8" fill="#b3afd6" stroke="#0a0a0a" stroke-width="1.25" stroke-linejoin="round" />
<polygon points="558.7,298.8 575.7,297.6 575.2,300.6 560.2,302" fill="#58565b" stroke="#0a0a0a" stroke-width="1.0" stroke-linejoin="round" />
<path d="M621.1 270.7 L621.1 302 L644.9 311.1 L645.3 291.9 L639.3 290.9 Q626.2 284.8 623.1 269.7 Z" fill="#615f64" stroke="#0a0a0a" stroke-width="1.25" stroke-linejoin="round" stroke-linecap="round" />
<polygon points="596.9,227.3 609,230.3 629.2,259.6 623.1,260.6 621.1,270.7 597.9,261.6" fill="#615f64" stroke="#0a0a0a" stroke-width="1.25" stroke-linejoin="round" />
<rect x="602.4" y="247.1" width="15.2" height="10" rx="5" transform="rotate(22 610 252.1)" fill="#a9a5ce" stroke="#0a0a0a" stroke-width="1.6"/>
<path d="M623.1 269.7 L635.7 268.7 Q637.3 284.8 650.4 288.5 L639.3 290.9 Q626.2 284.8 623.1 269.7 Z" fill="url(#armg)" stroke="#0a0a0a" stroke-width="1.25" stroke-linejoin="round" stroke-linecap="round" />
<polygon points="623.1,259.6 635.7,258.6 635.7,268.7 623.1,269.7" fill="#b3afd6" stroke="#0a0a0a" stroke-width="1.25" stroke-linejoin="round" />
<polygon points="636.4,289.7 653.4,288.5 652.9,291.5 637.9,292.9" fill="#58565b" stroke="#0a0a0a" stroke-width="1.0" stroke-linejoin="round" />
<path d="M698.8 260.7 L698.8 292 L722.6 301.1 L723 281.9 L717 280.9 Q703.9 274.8 700.8 259.7 Z" fill="#615f64" stroke="#0a0a0a" stroke-width="1.25" stroke-linejoin="round" stroke-linecap="round" />
<polygon points="674.6,217.3 686.7,220.3 706.9,249.6 700.8,250.6 698.8,260.7 675.6,251.6" fill="#615f64" stroke="#0a0a0a" stroke-width="1.25" stroke-linejoin="round" />
<rect x="680.1" y="237.1" width="15.2" height="10" rx="5" transform="rotate(22 687.7 242.1)" fill="#a9a5ce" stroke="#0a0a0a" stroke-width="1.6"/>
<path d="M700.8 259.7 L713.4 258.7 Q715 274.8 728.1 278.5 L717 280.9 Q703.9 274.8 700.8 259.7 Z" fill="url(#armg)" stroke="#0a0a0a" stroke-width="1.25" stroke-linejoin="round" stroke-linecap="round" />
<polygon points="700.8,249.6 713.4,248.6 713.4,258.7 700.8,259.7" fill="#b3afd6" stroke="#0a0a0a" stroke-width="1.25" stroke-linejoin="round" />
<polygon points="714.1,279.7 731.1,278.5 730.6,281.5 715.6,282.9" fill="#58565b" stroke="#0a0a0a" stroke-width="1.0" stroke-linejoin="round" />
<polygon points="382,811.2 403.6,807.6 404.3,822 397.8,821.3 386,827 382.7,835" fill="#615f64" stroke="#0a0a0a" stroke-width="1.25" stroke-linejoin="round" />
<polygon points="403.9,821.4 410,822.1 409.6,823.8 398.5,823.6" fill="#58565b" stroke="#0a0a0a" stroke-width="0.9" stroke-linejoin="round" />
<polygon points="356,835 382,831.1 382.7,846.2 385.6,848 366.8,861.7 356.4,858.8" fill="#615f64" stroke="#0a0a0a" stroke-width="1.25" stroke-linejoin="round" />
<rect x="361.6" y="837.3" width="14.8" height="10.2" rx="5.1" transform="rotate(27 369 842.4)" fill="#a9a5ce" stroke="#0a0a0a" stroke-width="1.6"/>
<path d="M383 837.9 Q383.3 825.5 397 821.3 L399.3 823.5 Q394.3 827 394.9 836.4 Z" fill="url(#armg2)" stroke="#0a0a0a" stroke-width="1.25" stroke-linejoin="round" stroke-linecap="round" />
<polygon points="383,837.9 394.9,836.4 394.9,845.1 383,846.2" fill="#b3afd6" stroke="#0a0a0a" stroke-width="1.25" stroke-linejoin="round" />
<polygon points="459.8,801.1 481.4,797.5 482.1,811.9 475.6,811.2 463.8,816.9 460.5,824.9" fill="#615f64" stroke="#0a0a0a" stroke-width="1.25" stroke-linejoin="round" />
<polygon points="481.7,811.3 487.8,812 487.4,813.7 476.3,813.5" fill="#58565b" stroke="#0a0a0a" stroke-width="0.9" stroke-linejoin="round" />
<polygon points="433.8,824.9 459.8,821 460.5,836.1 463.4,837.9 444.6,851.6 434.2,848.7" fill="#615f64" stroke="#0a0a0a" stroke-width="1.25" stroke-linejoin="round" />
<rect x="439.4" y="827.2" width="14.8" height="10.2" rx="5.1" transform="rotate(27 446.8 832.3)" fill="#a9a5ce" stroke="#0a0a0a" stroke-width="1.6"/>
<path d="M460.8 827.8 Q461.1 815.4 474.8 811.2 L477.1 813.4 Q472.1 816.9 472.7 826.3 Z" fill="url(#armg2)" stroke="#0a0a0a" stroke-width="1.25" stroke-linejoin="round" stroke-linecap="round" />
<polygon points="460.8,827.8 472.7,826.3 472.7,835 460.8,836.1" fill="#b3afd6" stroke="#0a0a0a" stroke-width="1.25" stroke-linejoin="round" />
<polygon points="537.1,791 558.7,787.4 559.4,801.8 552.9,801.1 541.1,806.8 537.8,814.8" fill="#615f64" stroke="#0a0a0a" stroke-width="1.25" stroke-linejoin="round" />
<polygon points="559,801.2 565.1,801.9 564.7,803.6 553.6,803.4" fill="#58565b" stroke="#0a0a0a" stroke-width="0.9" stroke-linejoin="round" />
<polygon points="511.1,814.8 537.1,810.9 537.8,826 540.7,827.8 521.9,841.5 511.5,838.6" fill="#615f64" stroke="#0a0a0a" stroke-width="1.25" stroke-linejoin="round" />
<rect x="516.7" y="817.1" width="14.8" height="10.2" rx="5.1" transform="rotate(27 524.1 822.2)" fill="#a9a5ce" stroke="#0a0a0a" stroke-width="1.6"/>
<path d="M538.1 817.7 Q538.4 805.3 552.1 801.1 L554.4 803.3 Q549.4 806.8 550 816.2 Z" fill="url(#armg2)" stroke="#0a0a0a" stroke-width="1.25" stroke-linejoin="round" stroke-linecap="round" />
<polygon points="538.1,817.7 550,816.2 550,824.9 538.1,826" fill="#b3afd6" stroke="#0a0a0a" stroke-width="1.25" stroke-linejoin="round" />
<polygon points="614.8,782 636.4,778.4 637.1,792.8 630.6,792.1 618.8,797.8 615.5,805.8" fill="#615f64" stroke="#0a0a0a" stroke-width="1.25" stroke-linejoin="round" />
<polygon points="636.7,792.2 642.8,792.9 642.4,794.6 631.3,794.4" fill="#58565b" stroke="#0a0a0a" stroke-width="0.9" stroke-linejoin="round" />
<polygon points="588.8,805.8 614.8,801.9 615.5,817 618.4,818.8 599.6,832.5 589.2,829.6" fill="#615f64" stroke="#0a0a0a" stroke-width="1.25" stroke-linejoin="round" />
<rect x="594.4" y="808.1" width="14.8" height="10.2" rx="5.1" transform="rotate(27 601.8 813.2)" fill="#a9a5ce" stroke="#0a0a0a" stroke-width="1.6"/>
<path d="M615.8 808.7 Q616.1 796.3 629.8 792.1 L632.1 794.3 Q627.1 797.8 627.7 807.2 Z" fill="url(#armg2)" stroke="#0a0a0a" stroke-width="1.25" stroke-linejoin="round" stroke-linecap="round" />
<polygon points="615.8,808.7 627.7,807.2 627.7,815.9 615.8,817" fill="#b3afd6" stroke="#0a0a0a" stroke-width="1.25" stroke-linejoin="round" />
<polygon points="692.5,771.9 714.1,768.3 714.8,782.7 708.3,782 696.5,787.7 693.2,795.7" fill="#615f64" stroke="#0a0a0a" stroke-width="1.25" stroke-linejoin="round" />
<polygon points="714.4,782.1 720.5,782.8 720.1,784.5 709,784.3" fill="#58565b" stroke="#0a0a0a" stroke-width="0.9" stroke-linejoin="round" />
<polygon points="666.5,795.7 692.5,791.8 693.2,806.9 696.1,808.7 677.3,822.4 666.9,819.5" fill="#615f64" stroke="#0a0a0a" stroke-width="1.25" stroke-linejoin="round" />
<rect x="672.1" y="798" width="14.8" height="10.2" rx="5.1" transform="rotate(27 679.5 803.1)" fill="#a9a5ce" stroke="#0a0a0a" stroke-width="1.6"/>
<path d="M693.5 798.6 Q693.8 786.2 707.5 782 L709.8 784.2 Q704.8 787.7 705.4 797.1 Z" fill="url(#armg2)" stroke="#0a0a0a" stroke-width="1.25" stroke-linejoin="round" stroke-linecap="round" />
<polygon points="693.5,798.6 705.4,797.1 705.4,805.8 693.5,806.9" fill="#b3afd6" stroke="#0a0a0a" stroke-width="1.25" stroke-linejoin="round" />
</svg>
<div class="b" style="left:0px;top:0px;width:1880px;height:35px;background:#464646;"></div>
<div class="b" style="left:0px;top:0px;width:1880px;height:1px;background:#b4b4b4;"></div>
<div class="b" style="left:0px;top:34px;width:1880px;height:1px;background:#8e8e8e;"></div>
<div class="b" style="left:0px;top:35px;width:1880px;height:81px;background:#464646;"></div>
<div class="b" style="left:0px;top:116px;width:1880px;height:22px;background:#323232;"></div>
<div class="b" style="left:63px;top:116px;width:1817px;height:1px;background:#6e6e6e;"></div>
<div class="b" style="left:0px;top:116px;width:63px;height:22px;background:#464646;"></div>
<div class="b" style="left:63px;top:116px;width:1px;height:22px;background:#747474;"></div>
<div class="b" style="left:119px;top:116px;width:1px;height:22px;background:#747474;"></div>
<div class="b" style="left:179px;top:116px;width:1px;height:22px;background:#747474;"></div>
<div class="b" style="left:257px;top:116px;width:1px;height:22px;background:#747474;"></div>
<div class="b" style="left:333px;top:116px;width:1px;height:22px;background:#747474;"></div>
<div class="b" style="left:407px;top:116px;width:1px;height:22px;background:#747474;"></div>
<div class="b" style="left:464px;top:116px;width:1px;height:22px;background:#747474;"></div>
<div class="b" style="left:523px;top:116px;width:1px;height:22px;background:#747474;"></div>
<div class="b" style="left:631px;top:116px;width:1px;height:22px;background:#747474;"></div>
<div class="b" style="left:764px;top:116px;width:1px;height:22px;background:#747474;"></div>
<div class="b" style="left:884px;top:116px;width:1px;height:22px;background:#747474;"></div>
<span class="t" style="left:143.40px;top:13px;font-size:11.75px;color:#f0f0f0;letter-spacing:-0.184px;">File</span>
<span class="t" style="left:177.10px;top:13px;font-size:11.75px;color:#f0f0f0;letter-spacing:0.088px;">Edit</span>
<span class="t" style="left:213.20px;top:13px;font-size:11.75px;color:#f0f0f0;letter-spacing:0.161px;">View</span>
<span class="t" style="left:254.10px;top:13px;font-size:11.75px;color:#f0f0f0;letter-spacing:0.119px;">Insert</span>
<span class="t" style="left:298.80px;top:13px;font-size:11.75px;color:#f0f0f0;letter-spacing:0.094px;">Tools</span>
<span class="t" style="left:341.70px;top:13px;font-size:11.75px;color:#f0f0f0;letter-spacing:0.618px;">Window</span>
<div class="b" style="left:419px;top:2px;width:1px;height:31px;background:#6a6a6a;"></div>
<span class="t" style="left:7.80px;top:122px;font-size:11.75px;color:#ffffff;letter-spacing:0.027px;font-weight:700;">Features</span>
<span class="t" style="left:73.80px;top:122px;font-size:11.75px;color:#ffffff;letter-spacing:-0.037px;">Sketch</span>
<span class="t" style="left:127.80px;top:122px;font-size:11.75px;color:#ffffff;letter-spacing:-0.209px;">Surfaces</span>
<span class="t" style="left:187.80px;top:122px;font-size:11.75px;color:#ffffff;letter-spacing:-0.000px;">Sheet Metal</span>
<span class="t" style="left:265.80px;top:122px;font-size:11.75px;color:#ffffff;letter-spacing:0.238px;">Weldments</span>
<span class="t" style="left:341.80px;top:122px;font-size:11.75px;color:#ffffff;letter-spacing:0.275px;">Mold Tools</span>
<span class="t" style="left:415.80px;top:122px;font-size:11.75px;color:#ffffff;letter-spacing:0.420px;">Markup</span>
<span class="t" style="left:472.80px;top:122px;font-size:11.75px;color:#ffffff;letter-spacing:-0.128px;">Evaluate</span>
<span class="t" style="left:532.80px;top:122px;font-size:11.75px;color:#ffffff;letter-spacing:0.067px;">MBD Dimensions</span>
<span class="t" style="left:639.80px;top:122px;font-size:11.75px;color:#ffffff;letter-spacing:-0.281px;">SOLIDWORKS Add-Ins</span>
<span class="t" style="left:772.80px;top:122px;font-size:11.75px;color:#ffffff;letter-spacing:-0.452px;">SOLIDWORKS CAM</span>
<span class="t" style="left:893.80px;top:122px;font-size:11.75px;color:#ffffff;letter-spacing:-0.845px;">SOLIDWORKS</span>
<div class="b" style="left:267px;top:37px;width:1px;height:78px;background:#5e5e5e;"></div>
<div class="b" style="left:702px;top:37px;width:1px;height:78px;background:#5e5e5e;"></div>
<span class="t" style="left:13.00px;top:62px;font-size:11.75px;color:#8b9b9d;letter-spacing:-0.066px;">Extruded</span>
<span class="t" style="left:11.30px;top:75px;font-size:11.75px;color:#8b9b9d;letter-spacing:-0.697px;">Boss/Base</span>
<span class="t" style="left:73.20px;top:62px;font-size:11.75px;color:#8b9b9d;letter-spacing:-0.311px;">Revolved</span>
<span class="t" style="left:71.50px;top:75px;font-size:11.75px;color:#8b9b9d;letter-spacing:-0.697px;">Boss/Base</span>
<span class="t" style="left:274.30px;top:62px;font-size:11.75px;color:#8b9b9d;letter-spacing:-0.116px;">Extruded</span>
<span class="t" style="left:288.20px;top:75px;font-size:11.75px;color:#8b9b9d;letter-spacing:0.072px;">Cut</span>
<span class="t" style="left:336.00px;top:62px;font-size:11.75px;color:#8b9b9d;letter-spacing:0.158px;">Hole</span>
<span class="t" style="left:330.40px;top:75px;font-size:11.75px;color:#8b9b9d;letter-spacing:-0.077px;">Wizard</span>
<span class="t" style="left:376.50px;top:62px;font-size:11.75px;color:#8b9b9d;letter-spacing:-0.361px;">Revolved</span>
<span class="t" style="left:390.40px;top:75px;font-size:11.75px;color:#8b9b9d;letter-spacing:-0.028px;">Cut</span>
<span class="t" style="left:432.10px;top:62px;font-size:11.75px;color:#8b9b9d;letter-spacing:-0.083px;">Move</span>
<span class="t" style="left:434.20px;top:75px;font-size:11.75px;color:#8b9b9d;letter-spacing:-0.706px;">Face</span>
<span class="t" style="left:470.50px;top:62px;font-size:11.75px;color:#8b9b9d;letter-spacing:-0.270px;">Delete/Keep</span>
<span class="t" style="left:488.20px;top:75px;font-size:11.75px;color:#8b9b9d;letter-spacing:-0.221px;">Body</span>
<span class="t" style="left:542.70px;top:62px;font-size:11.75px;color:#8b9b9d;letter-spacing:-0.146px;">Combine</span>
<span class="t" style="left:709.20px;top:62px;font-size:11.75px;color:#8b9b9d;letter-spacing:0.098px;">Fillet</span>
<span class="t" style="left:747.40px;top:62px;font-size:11.75px;color:#8b9b9d;letter-spacing:-0.211px;">Linear</span>
<span class="t" style="left:744.10px;top:75px;font-size:11.75px;color:#8b9b9d;letter-spacing:-0.055px;">Pattern</span>
<span class="t" style="left:154.00px;top:43px;font-size:11.75px;color:#8b9b9d;letter-spacing:-0.453px;">Swept Boss/Base</span>
<span class="t" style="left:154.00px;top:69px;font-size:11.75px;color:#8b9b9d;letter-spacing:-0.375px;">Lofted Boss/Base</span>
<span class="t" style="left:154.00px;top:95px;font-size:11.75px;color:#8b9b9d;letter-spacing:-0.396px;">Boundary Boss/Base</span>
<span class="t" style="left:621.30px;top:43px;font-size:11.75px;color:#8b9b9d;letter-spacing:-0.067px;">Swept Cut</span>
<span class="t" style="left:621.30px;top:69px;font-size:11.75px;color:#8b9b9d;letter-spacing:0.028px;">Lofted Cut</span>
<span class="t" style="left:621.30px;top:95px;font-size:11.75px;color:#8b9b9d;letter-spacing:-0.113px;">Boundary Cut</span>
<span class="t" style="left:814.50px;top:43px;font-size:11.75px;color:#8b9b9d;letter-spacing:-0.210px;">Rib</span>
<span class="t" style="left:814.50px;top:69px;font-size:11.75px;color:#8b9b9d;letter-spacing:0.127px;">Draft</span>
<span class="t" style="left:814.50px;top:95px;font-size:11.75px;color:#8b9b9d;letter-spacing:-0.146px;">Shell</span>
<span class="t" style="left:877.80px;top:43px;font-size:11.75px;color:#8b9b9d;letter-spacing:0.185px;">Wrap</span>
<span class="t" style="left:878.20px;top:69px;font-size:11.75px;color:#8b9b9d;letter-spacing:0.360px;">Intersect</span>
<span class="t" style="left:878.50px;top:95px;font-size:11.75px;color:#8b9b9d;letter-spacing:0.304px;">Mirror</span>
<div class="b" style="left:0px;top:972px;width:1880px;height:50px;background:#464646;"></div>
<div class="b" style="left:0px;top:973px;width:27px;height:15px;background:#8d8d8d;"></div>
<div class="b" style="left:27px;top:973px;width:65px;height:15px;background:#9a9a9a;"></div>
<div class="b" style="left:43px;top:974px;width:1px;height:13px;background:#b4b4b4;"></div>
<div class="b" style="left:59px;top:974px;width:1px;height:13px;background:#b4b4b4;"></div>
<div class="b" style="left:76px;top:974px;width:1px;height:13px;background:#b4b4b4;"></div>
<div class="b" style="left:92px;top:974px;width:1px;height:13px;background:#b4b4b4;"></div>
<svg class="b" style="left:27px;top:973px" width="65" height="15" viewBox="0 0 65 15">
    <g fill="#7f7f7f" stroke="#7a7a7a" stroke-width="0.6">
      <path d="M5 3v9h1.5V3z M12 3L7 7.5L12 12z"/>
      <path d="M27 3L22 7.5L27 12z"/>
      <path d="M38 3L43 7.5L38 12z"/>
      <path d="M53 3L58 7.5L53 12z M58.5 3v9H60V3z"/>
    </g></svg>
<span class="t" style="left:104.10px;top:974px;font-size:11.75px;color:#ffffff;letter-spacing:0.391px;font-weight:700;">Model</span>
<div class="b" style="left:148px;top:974px;width:88px;height:15px;background:#353535;border:1px solid #6a6a6a;border-bottom:none;box-sizing:border-box;"></div>
<span class="t" style="left:157.10px;top:974px;font-size:11.75px;color:#f0f0f0;letter-spacing:0.341px;">Animation1</span>
<div class="b" style="left:3px;top:993px;width:2px;height:26px;background:repeating-linear-gradient(to bottom,#e6e6e6 0 2px,transparent 2px 4px)"></div>
<div class="b" style="left:832px;top:993px;width:2px;height:26px;background:repeating-linear-gradient(to bottom,#e6e6e6 0 2px,transparent 2px 4px)"></div>
<div class="b" style="left:167px;top:991px;width:1px;height:29px;background:#6c6c6c;"></div>
<div class="b" style="left:827px;top:991px;width:1px;height:29px;background:#6c6c6c;"></div>
<div class="b" style="left:0px;top:1021px;width:1880px;height:19px;background:#8f8f8f;"></div>
<span class="t" style="left:1.30px;top:1026px;font-size:11.75px;color:#f4f4f4;letter-spacing:-0.649px;">SOLIDWORKS 2022 SP5.0</span>
<span class="t" style="left:1634.80px;top:1026px;font-size:11.75px;color:#e8e8e8;letter-spacing:0.121px;">Editing Part</span>
<span class="t" style="left:1811.80px;top:1026px;font-size:11.75px;color:#a4a4a4;letter-spacing:0.119px;">Custom</span>
<svg class="b" style="left:5px;top:4px" width="22" height="22" viewBox="0 0 22 22"><g fill="none" stroke="#f2f2f2" stroke-linecap="round" stroke-linejoin="round">
<path d="M8.5 1.5 C11.5 1.2 13.2 2.8 12 4.6 C11.2 5.8 9.6 6.2 8.6 6.4 C11 6.6 12.4 8 11.6 10 C10.6 12.4 7.6 13.6 5 13.6" stroke-width="1.8"/>
<path d="M12.8 8 L8.6 8.4 L1 20.2 C4 19 9.5 15.5 12.8 8 Z" stroke-width="1.2" fill="#f2f2f2" fill-opacity="0.15"/>
<path d="M19.6 8.2 C17.2 7 14.2 7.6 14.2 9.8 C14.2 12 19.6 11.8 19.6 14.4 C19.6 17 15.6 17.4 13.2 16" stroke-width="2"/>
</g></svg>
<span class="t" style="left:30.30px;top:12px;font-size:13.5px;color:#ffffff;letter-spacing:-0.310px;font-weight:700;font-style:italic;">SOLID</span>
<span class="t" style="left:70.10px;top:12px;font-size:13.5px;color:#ededed;letter-spacing:-1.760px;font-style:italic;">WORKS</span>
<svg class="b" style="left:400px;top:10px" width="14" height="14" viewBox="0 0 14 14"><g fill="#f4f4f4"><path d="M8.2 0.6L13.4 5.8L12.2 7L10.9 6.6L8.3 9.2L8.4 11.6L7.2 12.8L1.2 6.8L2.4 5.6L4.8 5.7L7.4 3.1L7 1.8Z"/><path d="M4 9L5 10L0.6 13.6Z"/></g></svg>
<svg class="b" style="left:443px;top:8px" width="18" height="20" viewBox="0 0 18 20"><path d="M9 1L17 9.5H14.5V18H10.8V13H7.2V18H3.5V9.5H1Z" fill="#6b6b6b"/><rect x="7.8" y="13.4" width="2.6" height="3.4" fill="#4c4c4c"/></svg>
<svg class="b" style="left:474px;top:8px" width="14" height="20" viewBox="0 0 14 20"><path d="M0.5 0.5H8.5L13.5 5.5V19.5H0.5Z" fill="#6b6b6b"/><path d="M8.5 0.5V5.5H13.5Z" fill="#565656"/></svg>
<svg class="b" style="left:500px;top:16px" width="5" height="3" viewBox="0 0 5 3"><path d="M0 0H5L2.5 3Z" fill="#8a8a8a"/></svg>
<svg class="b" style="left:515px;top:7px" width="19" height="21" viewBox="0 0 19 21"><path d="M0.5 4.5H7L9 7H13V20.5H0.5Z" fill="#6b6b6b"/><path d="M4 10H18.5L14 20.5H0.5Z" fill="#747474"/><path d="M9 0.5C13 0.5 15.5 3 15.5 6.5H17.8L14.2 10.5L10.6 6.5H13C13 4.5 11.5 3 9 3Z" fill="#6b6b6b"/></svg>
<svg class="b" style="left:544px;top:16px" width="5" height="3" viewBox="0 0 5 3"><path d="M0 0H5L2.5 3Z" fill="#8a8a8a"/></svg>
<svg class="b" style="left:560px;top:8px" width="18" height="19" viewBox="0 0 18 19"><path d="M0.5 0.5H17.5V18.5H3L0.5 16Z" fill="#6b6b6b"/><rect x="3.5" y="1.5" width="11" height="7" fill="#595959"/><path d="M4.5 3.5h9M4.5 5.5h9" stroke="#777" stroke-width="0.8"/><rect x="5" y="12" width="9" height="6.5" fill="#595959"/><path d="M8 13v5M10.5 13v5" stroke="#777" stroke-width="1"/></svg>
<svg class="b" style="left:588px;top:16px" width="5" height="3" viewBox="0 0 5 3"><path d="M0 0H5L2.5 3Z" fill="#8a8a8a"/></svg>
<svg class="b" style="left:604px;top:7px" width="19" height="21" viewBox="0 0 19 21"><rect x="4.5" y="0.5" width="10" height="8" fill="#ffffff" stroke="#d8d8d8" stroke-width="0.5"/><rect x="0.5" y="8.5" width="18" height="8" rx="1.2" fill="#f0f2f4"/><rect x="0.5" y="10.5" width="18" height="3.6" fill="#1f6fc4"/><rect x="3" y="11.4" width="13" height="1.3" fill="#0d2c5a"/><rect x="3.5" y="16" width="12" height="3.6" fill="#ffffff" stroke="#cfcfcf" stroke-width="0.5"/><rect x="14.5" y="9.2" width="2" height="1" fill="#9fd0ff"/></svg>
<svg class="b" style="left:632px;top:16px" width="6" height="4" viewBox="0 0 6 4"><path d="M0 0H6L3.0 4Z" fill="#f2f2f2"/></svg>
<svg class="b" style="left:648px;top:9px" width="19" height="19" viewBox="0 0 19 19"><path d="M1 1.5V9H8.5L5.8 6.3C8.5 4.4 13 5.2 13.6 9.6C14 12.6 12 15.4 9.6 17.4L11.6 18.6C15.4 16 18 12.4 17.2 8.4C16.2 3.2 8.8 1.4 4 4.5Z" fill="#5f5f5f" stroke="#6b6b6b" stroke-width="1"/></svg>
<svg class="b" style="left:676px;top:16px" width="5" height="3" viewBox="0 0 5 3"><path d="M0 0H5L2.5 3Z" fill="#8a8a8a"/></svg>
<svg class="b" style="left:692px;top:9px" width="19" height="19" viewBox="0 0 19 19"><path d="M18 1.5V9H10.5L13.2 6.3C10.5 4.4 6 5.2 5.4 9.6C5 12.6 7 15.4 9.4 17.4L7.4 18.6C3.6 16 1 12.4 1.8 8.4C2.8 3.2 10.2 1.4 15 4.5Z" fill="#5f5f5f" stroke="#6b6b6b" stroke-width="1"/></svg>
<svg class="b" style="left:720px;top:16px" width="5" height="3" viewBox="0 0 5 3"><path d="M0 0H5L2.5 3Z" fill="#8a8a8a"/></svg>
<svg class="b" style="left:739px;top:9px" width="14" height="19" viewBox="0 0 14 19"><path d="M0.8 0.8L11.5 11H6.6L9.6 17L7.4 18L4.6 12.2L0.8 15.5Z" fill="#707070"/></svg>
<svg class="b" style="left:764px;top:16px" width="5" height="3" viewBox="0 0 5 3"><path d="M0 0H5L2.5 3Z" fill="#8a8a8a"/></svg>
<svg class="b" style="left:782px;top:8px" width="14" height="21" viewBox="0 0 14 21"><rect x="1" y="1" width="11.5" height="19" rx="5.7" fill="#505050" stroke="#68686c" stroke-width="1.2"/><circle cx="6.8" cy="6.6" r="2" fill="#5e5e62"/><circle cx="6.8" cy="14.2" r="2" fill="#5e5e62"/></svg>
<svg class="b" style="left:812px;top:10px" width="15" height="17" viewBox="0 0 15 17"><rect x="0.5" y="0.5" width="14" height="16" fill="#585858" stroke="#6b6b6b"/><g fill="none" stroke="#7a7a7a" stroke-width="1"><rect x="2" y="2" width="3.6" height="3.2"/><rect x="2" y="7" width="3.6" height="3.2"/><rect x="2" y="12" width="3.6" height="3.2"/><path d="M7.5 3.5h6M7.5 8.5h6M7.5 13.5h6"/></g></svg>
<svg class="b" style="left:840px;top:9px" width="17" height="17" viewBox="0 0 17 17"><g transform="translate(8.5 8.5)"><g fill="#f6f6f6"><rect x="-1.9" y="-8.3" width="3.8" height="4" rx="0.8" transform="rotate(0)"/><rect x="-1.9" y="-8.3" width="3.8" height="4" rx="0.8" transform="rotate(45)"/><rect x="-1.9" y="-8.3" width="3.8" height="4" rx="0.8" transform="rotate(90)"/><rect x="-1.9" y="-8.3" width="3.8" height="4" rx="0.8" transform="rotate(135)"/><rect x="-1.9" y="-8.3" width="3.8" height="4" rx="0.8" transform="rotate(180)"/><rect x="-1.9" y="-8.3" width="3.8" height="4" rx="0.8" transform="rotate(225)"/><rect x="-1.9" y="-8.3" width="3.8" height="4" rx="0.8" transform="rotate(270)"/><rect x="-1.9" y="-8.3" width="3.8" height="4" rx="0.8" transform="rotate(315)"/><circle r="6.3"/></g><circle r="3.4" fill="#464646"/><circle r="2.2" fill="#3a3a3a"/></g></svg>
<svg class="b" style="left:867px;top:16px" width="7" height="4" viewBox="0 0 7 4"><path d="M0 0H7L3.5 4Z" fill="#f2f2f2"/></svg>
<svg class="b" style="left:27px;top:41px" width="18" height="18" viewBox="0 0 18 18"><path d="M8 1.5L13.5 0.5L17 2.5V15.5L12.5 17.5L8 15Z" fill="#77797b" stroke="#3c3c3c" stroke-width="0.6"/><path d="M13.5 3.8V17" stroke="#3c3c3c" stroke-width="0.6"/><path d="M1 7L6.5 4.8L11.5 6.6V13.8L6 16.4L1 13.8Z" fill="#5a5c5e" stroke="#3c3c3c" stroke-width="0.6"/><path d="M1 7L6 9L11.5 6.6M6 9V16.4" fill="none" stroke="#3c3c3c" stroke-width="0.6"/></svg>
<svg class="b" style="left:87px;top:41px" width="18" height="18" viewBox="0 0 18 18"><circle cx="9" cy="9" r="8" fill="#5a5c5e" stroke="#3c3c3c" stroke-width="0.7"/><path d="M9 1A8 8 0 0 1 17 9A8 8 0 0 1 9 17A4.5 8 0 0 0 9 1Z" fill="#6a6c6e"/><path d="M2 12L15 6.5M3.5 6.5L14 11.5" stroke="#7c7e80" stroke-width="1.6"/><path d="M2 13.5C5 17 12 17 15.5 13" fill="none" stroke="#77797b" stroke-width="1.2"/></svg>
<svg class="b" style="left:288px;top:41px" width="18" height="18" viewBox="0 0 18 18"><path d="M3 3.5L13.5 1L15.5 2.5V14.5L5 17L3 15.5Z" fill="#6a6c6e" stroke="#3c3c3c" stroke-width="0.6"/><path d="M5 5L15.5 2.5M5 5V17" stroke="#3c3c3c" stroke-width="0.6" fill="none"/><rect x="7" y="6.5" width="6" height="6.5" fill="#5a5c5e" stroke="#7f8183" stroke-width="0.7" transform="skewY(-12) translate(0 2.2)"/></svg>
<svg class="b" style="left:340px;top:41px" width="18" height="18" viewBox="0 0 18 18"><path d="M2 7L9 4L15.5 7V14L9 17L2 14Z" fill="#6a6c6e" stroke="#3c3c3c" stroke-width="0.6"/><circle cx="8.5" cy="11" r="3.4" fill="#5a5c5e" stroke="#808284" stroke-width="0.8"/><path d="M8 0.5L11.5 0.5L16.5 5.5L14.5 7.5L9.5 3Z" fill="#7e8082" stroke="#3c3c3c" stroke-width="0.5"/><path d="M3 3.2L6.5 1.5" stroke="#7e8082" stroke-width="1.6"/></svg>
<svg class="b" style="left:389px;top:41px" width="18" height="18" viewBox="0 0 18 18"><path d="M1.5 5C1.5 2 16.5 2 16.5 5V14C16.5 17 1.5 17 1.5 14Z" fill="#6a6c6e" stroke="#3c3c3c" stroke-width="0.6"/><ellipse cx="9" cy="5" rx="7.5" ry="2.6" fill="#77797b" stroke="#3c3c3c" stroke-width="0.5"/><path d="M9 5L5.5 8V16.5L9 14L12.5 16.5V8Z" fill="#5a5c5e" stroke="#3c3c3c" stroke-width="0.5"/></svg>
<svg class="b" style="left:437px;top:41px" width="18" height="18" viewBox="0 0 18 18"><path d="M1.5 5L8 2L15.5 5V13L8.5 16.5L1.5 13Z" fill="#6a6c6e" stroke="#3c3c3c" stroke-width="0.7"/><path d="M1.5 5L8.5 8.2L15.5 5M8.5 8.2V16.5" fill="none" stroke="#3c3c3c" stroke-width="0.7"/><path d="M1.5 5L8 2L15.5 5L8.5 8.2Z" fill="#77797b"/><path d="M8.5 8.2L15.5 5V13L8.5 16.5Z" fill="#5a5c5e"/><path d="M8 9.5H13.5M11.5 7.5L13.8 9.5L11.5 11.5" stroke="#85878a" stroke-width="1.2" fill="none"/></svg>
<svg class="b" style="left:490px;top:40px" width="22" height="21" viewBox="0 0 22 21"><g transform="scale(1.12)"><path d="M1.5 5L8 2L15.5 5V13L8.5 16.5L1.5 13Z" fill="#6a6c6e" stroke="#3c3c3c" stroke-width="0.7"/><path d="M1.5 5L8.5 8.2L15.5 5M8.5 8.2V16.5" fill="none" stroke="#3c3c3c" stroke-width="0.7"/><path d="M1.5 5L8 2L15.5 5L8.5 8.2Z" fill="#77797b"/><path d="M8.5 8.2L15.5 5V13L8.5 16.5Z" fill="#5a5c5e"/></g><path d="M14.5 14.5L20 20M20 14.5L14.5 20" stroke="#7d7f81" stroke-width="1.8"/></svg>
<svg class="b" style="left:556px;top:41px" width="18" height="18" viewBox="0 0 18 18"><path d="M6 2.5L11 1L15.5 3V9L11 11L6 9Z" fill="#77797b" stroke="#3c3c3c" stroke-width="0.6"/><path d="M2 8L7.5 6L12.5 8.2V14.5L7.5 17L2 14.5Z" fill="#6a6c6e" stroke="#3c3c3c" stroke-width="0.6"/><path d="M2 8L7.5 10.2L12.5 8.2M7.5 10.2V17" fill="none" stroke="#3c3c3c" stroke-width="0.6"/></svg>
<svg class="b" style="left:712px;top:41px" width="18" height="18" viewBox="0 0 18 18"><path d="M1.5 6C1.5 2.5 6 1 9.5 1.5L16.5 4V13L8.5 16.5L1.5 13Z" fill="#6a6c6e" stroke="#3c3c3c" stroke-width="0.6"/><path d="M1.5 6C4 3.5 8 5.5 8.5 8.5L16.5 4" fill="none" stroke="#3c3c3c" stroke-width="0.6"/><path d="M1.5 6C4 3.5 8 5.5 8.5 8.5V16.5L1.5 13Z" fill="#5a5c5e"/></svg>
<svg class="b" style="left:755px;top:42px" width="15" height="17" viewBox="0 0 15 17"><path d="M1 1h2v1.6l3 -0.2l-3 3.4v1.4h-2z" fill="#6e7072"/><path d="M1 9.5h2v1.6l3 -0.2l-3 3.4v1.4h-2z" fill="#6e7072"/><path d="M9 1h2v1.6l3 -0.2l-3 3.4v1.4h-2z" fill="#6e7072"/><path d="M9 9.5h2v1.6l3 -0.2l-3 3.4v1.4h-2z" fill="#6e7072"/></svg>
<svg class="b" style="left:345px;top:102px" width="5" height="3" viewBox="0 0 5 3"><path d="M0 0H5L2.5 3Z" fill="#858789"/></svg>
<svg class="b" style="left:719px;top:102px" width="5" height="3" viewBox="0 0 5 3"><path d="M0 0H5L2.5 3Z" fill="#858789"/></svg>
<svg class="b" style="left:760px;top:102px" width="5" height="3" viewBox="0 0 5 3"><path d="M0 0H5L2.5 3Z" fill="#858789"/></svg>
<svg class="b" style="left:129px;top:41px" width="17" height="17" viewBox="0 0 17 17"><path d="M2 12.5C2 16 7 16 8 11.5L9.5 5.5C10 3 12.5 3 13 4.5" fill="none" stroke="#6a6c6e" stroke-width="3.4" stroke-linecap="round"/><circle cx="14.5" cy="4.2" r="1.6" fill="#77797b"/></svg>
<svg class="b" style="left:129px;top:66.5px" width="17" height="17" viewBox="0 0 17 17"><path d="M6 1.5H11V5.5L14.5 13L8.5 16L2.5 13L6 5.5Z" fill="#5a5c5e" stroke="#3c3c3c" stroke-width="0.6"/><ellipse cx="8.5" cy="1.8" rx="2.5" ry="0.9" fill="#77797b"/></svg>
<svg class="b" style="left:129px;top:92.5px" width="17" height="17" viewBox="0 0 17 17"><path d="M1 8L7 4L10 5.5L13 2.5L16.5 5V12L9 16.5L1 12.5Z" fill="#6a6c6e" stroke="#3c3c3c" stroke-width="0.6"/><path d="M1 8L9 11.5L16.5 5M9 11.5V16.5" fill="none" stroke="#3c3c3c" stroke-width="0.6"/><path d="M4 7L7 8.3M8 5.8L11 7.4" stroke="#77797b" stroke-width="1.4"/></svg>
<svg class="b" style="left:597px;top:41px" width="17" height="17" viewBox="0 0 17 17"><path d="M1.5 5L5 2L15.5 1.5V13L5 16L1.5 14Z" fill="#6a6c6e" stroke="#3c3c3c" stroke-width="0.6"/><path d="M6 15V9C6 5.5 10 4 13 6V12" fill="#5a5c5e" stroke="#7d7f81" stroke-width="0.9"/></svg>
<svg class="b" style="left:597px;top:66.5px" width="17" height="17" viewBox="0 0 17 17"><path d="M1.5 5L8 2L15.5 4V13L9 16.5L1.5 13.5Z" fill="#6a6c6e" stroke="#3c3c3c" stroke-width="0.6"/><path d="M6 14.8V7.5C6 5.5 8.5 5 9 7V15.5M11.5 13.5V6" fill="none" stroke="#808284" stroke-width="1"/></svg>
<svg class="b" style="left:597px;top:92.5px" width="17" height="17" viewBox="0 0 17 17"><path d="M1 9L6 5.5L9 7L12 3.5L16.5 6V12L9 16.5L1 13Z" fill="#6a6c6e" stroke="#3c3c3c" stroke-width="0.6"/><path d="M4 8.5C6 11 10 10.5 12 6" fill="none" stroke="#77797b" stroke-width="1.6"/><path d="M1 9L9 12.5L16.5 6" fill="none" stroke="#3c3c3c" stroke-width="0.5"/></svg>
<svg class="b" style="left:790px;top:41px" width="17" height="17" viewBox="0 0 17 17"><path d="M2 13L11.5 1.5L15 3V13L6 16.5Z" fill="none" stroke="#77797b" stroke-width="1.4" stroke-linejoin="round"/><path d="M5.5 13L11.8 5V11Z" fill="#5a5c5e"/></svg>
<svg class="b" style="left:790px;top:66.5px" width="17" height="17" viewBox="0 0 17 17"><path d="M1.5 6L6 2.5L13 4.5L16 10V14.5L10 16.5L1.5 13Z" fill="#5a5c5e" stroke="#3c3c3c" stroke-width="0.6"/><path d="M10.5 10.5L16 10V14.5L10 16.5Z" fill="#77797b"/><path d="M1.5 6L10.5 10.5" stroke="#3c3c3c" stroke-width="0.6"/></svg>
<svg class="b" style="left:790px;top:92.5px" width="17" height="17" viewBox="0 0 17 17"><path d="M1.5 4L8.5 1.5L15.5 4V13.5L8.5 16.5L1.5 13.5Z" fill="#6a6c6e" stroke="#77797b" stroke-width="0.9"/><path d="M4.5 6L9 4.5L13 6V12L9 14L4.5 12Z" fill="#4f5153" stroke="#3c3c3c" stroke-width="0.6"/></svg>
<svg class="b" style="left:854px;top:41px" width="17" height="17" viewBox="0 0 17 17"><path d="M1 4.5C1 1.5 16 1.5 16 4.5V12.5C16 15.5 1 15.5 1 12.5Z" fill="#5a5c5e" stroke="#77797b" stroke-width="0.9"/><ellipse cx="8.5" cy="4.5" rx="7.5" ry="2.4" fill="#6a6c6e" stroke="#77797b" stroke-width="0.8"/><path d="M4 8.5H7.5V12.5H4M9.5 8.5V12.5C12 12.5 13 11.5 13 10.5C13 9.5 12 8.5 9.5 8.5" fill="none" stroke="#8a8c8e" stroke-width="1.1"/></svg>
<svg class="b" style="left:854px;top:66.5px" width="17" height="17" viewBox="0 0 17 17"><path d="M6 3L10.5 1L15 3V8.5L10.5 10.5L6 8.5Z" fill="#77797b" stroke="#3c3c3c" stroke-width="0.6"/><path d="M1.5 8L6 6V12L10 10.5V13L1.5 17Z" fill="#6a6c6e" stroke="#77797b" stroke-width="0.7"/></svg>
<svg class="b" style="left:854px;top:92.5px" width="17" height="17" viewBox="0 0 17 17"><path d="M8.5 0.5V16.5" stroke="#77797b" stroke-width="1.6"/><path d="M1.5 4V13M1.5 8.5H6M15.5 4V13M15.5 8.5H11" stroke="#6a6c6e" stroke-width="2.2"/></svg>
<svg class="b" width="0" height="0" style="left:0;top:0"><defs><pattern id="dotp" width="2" height="2" patternUnits="userSpaceOnUse"><rect width="2" height="2" fill="#202020"/><rect width="1" height="1" fill="#2c2c2c"/></pattern></defs></svg>
<svg class="b" style="left:20px;top:999px" width="15" height="15" viewBox="0 0 15 15"><path d="M0.5 1h13.5l-4.6 5v7h-4.4v-7z" fill="#6a6a6a" stroke="#585858" stroke-width="0.8"/></svg>
<svg class="b" style="left:44px;top:997px" width="21" height="21" viewBox="0 0 21 21"><g fill="#6a6a6a" stroke="#505050" stroke-width="0.8"><path d="M0.5 0.5h11l-3.6 3.6v5h-3.8v-5z"/><path d="M4.5 4.5h11l-3.6 3.6v5h-3.8v-5z"/><path d="M8.5 8.5h11l-3.6 3.6v6.5h-3.8v-6.5z"/></g></svg>
<svg class="b" style="left:71px;top:996px" width="21" height="22" viewBox="0 0 21 22"><g fill="#e8e0f2" stroke="#8b1a5a" stroke-width="1.3"><path d="M0.8 0.8h11l-3.6 3.6v5h-3.8v-5z"/><path d="M4.2 4.5h11l-3.6 3.6v5h-3.8v-5z"/><path d="M7.6 8.2h11l-3.6 3.8v7h-3.8v-7z"/></g></svg>
<svg class="b" style="left:102px;top:997px" width="13" height="19" viewBox="0 0 13 19"><path d="M0.8 0.8L11.5 11H6.6L9.6 17L7.4 18L4.6 12.2L0.8 15.5Z" fill="#707070"/></svg>
<svg class="b" style="left:126px;top:1004px" width="6" height="3" viewBox="0 0 6 3"><path d="M0 0H6L3.0 3Z" fill="#8a8a8a"/></svg>
<svg class="b" style="left:141px;top:996px" width="20" height="22" viewBox="0 0 20 22"><path d="M0.8 2.8L11.5 13H6.6L9.6 19L7.4 20L4.6 14.2L0.8 17.5Z" fill="#6a6a6a"/><path d="M6 1L9 0.5L17 9.5C18.5 12 17 14.5 15 16L12.5 13.5C13.5 12.5 13.8 11.8 13 10.8Z" fill="#5c5c5c" stroke="#6c6c70" stroke-width="0.6"/></svg>
<svg class="b" style="left:172.5px;top:993px" width="26" height="26" viewBox="0 0 26 26"><rect x="0" y="0" width="26" height="26" fill="#222222"/><rect x="0.5" y="0.5" width="25" height="25" fill="url(#dotp)" stroke="#0e0e0e" stroke-width="1"/><circle cx="8.3" cy="8.5" r="3.2" fill="#4fa3e0" stroke="#b8c4d0" stroke-width="0.9"/><path d="M13.8 12.8h9l-3 3.8v6.2h-3v-6.2z" fill="#9d86c6" stroke="#6f5a98" stroke-width="0.5"/></svg>
<svg class="b" style="left:199.5px;top:993px" width="26" height="26" viewBox="0 0 26 26"><rect x="0" y="0" width="26" height="26" fill="#222222"/><rect x="0.5" y="0.5" width="25" height="25" fill="url(#dotp)" stroke="#0e0e0e" stroke-width="1"/><rect x="7.2" y="2.5" width="2.6" height="19" fill="#2c7fd0" stroke="#9aa4b0" stroke-width="0.7"/><path d="M13.8 12.8h9l-3 3.8v6.2h-3v-6.2z" fill="#9d86c6" stroke="#6f5a98" stroke-width="0.5"/></svg>
<svg class="b" style="left:226.5px;top:993px" width="26" height="26" viewBox="0 0 26 26"><rect x="0" y="0" width="26" height="26" fill="#222222"/><rect x="0.5" y="0.5" width="25" height="25" fill="url(#dotp)" stroke="#0e0e0e" stroke-width="1"/><rect x="2.5" y="2.5" width="14" height="14" fill="#4fa3e0" stroke="#9ab0c8" stroke-width="0.9"/><rect x="4" y="4" width="11" height="11" fill="#9fd4f5" fill-opacity="0.45"/><path d="M13.8 12.8h9l-3 3.8v6.2h-3v-6.2z" fill="#9d86c6" stroke="#6f5a98" stroke-width="0.5"/></svg>
<svg class="b" style="left:253.5px;top:993px" width="26" height="26" viewBox="0 0 26 26"><rect x="0" y="0" width="26" height="26" fill="#222222"/><rect x="0.5" y="0.5" width="25" height="25" fill="url(#dotp)" stroke="#0e0e0e" stroke-width="1"/><path d="M2.5 11C5 7.5 8 7 10.5 8.5L12 3C15.5 2.5 18.5 4.5 20.5 8L19 13.5C17 11 14 11 11.5 14L10 20.5C7.5 17 5 14 2.5 11Z" fill="#4fa3e0" stroke="#a9c4dc" stroke-width="0.8"/><path d="M13.8 12.8h9l-3 3.8v6.2h-3v-6.2z" fill="#9d86c6" stroke="#6f5a98" stroke-width="0.5"/></svg>
<svg class="b" style="left:280.5px;top:993px" width="26" height="26" viewBox="0 0 26 26"><rect x="0" y="0" width="26" height="26" fill="#222222"/><rect x="0.5" y="0.5" width="25" height="25" fill="url(#dotp)" stroke="#0e0e0e" stroke-width="1"/><path d="M3 6.5L10 3L18 6V15.5L10.5 20L3 16Z" fill="#4fa3e0" stroke="#b4c8dc" stroke-width="0.9"/><path d="M3 6.5L10.5 9.5L18 6M10.5 9.5V20" fill="none" stroke="#1c5ea8" stroke-width="0.8"/><path d="M3 6.5L10 3L18 6L10.5 9.5Z" fill="#9fd4f5"/><path d="M13.8 12.8h9l-3 3.8v6.2h-3v-6.2z" fill="#9d86c6" stroke="#6f5a98" stroke-width="0.5"/></svg>
<svg class="b" style="left:307.5px;top:993px" width="26" height="26" viewBox="0 0 26 26"><rect x="0" y="0" width="26" height="26" fill="#222222"/><rect x="0.5" y="0.5" width="25" height="25" fill="url(#dotp)" stroke="#0e0e0e" stroke-width="1"/><path d="M3.5 17.5L18 3.5" stroke="#2c7fd0" stroke-width="2.6" stroke-linecap="round"/><path d="M3.5 17.5L18 3.5" stroke="#bfe0ff" stroke-width="0.8" stroke-dasharray="1.5 2"/><path d="M13.8 12.8h9l-3 3.8v6.2h-3v-6.2z" fill="#9d86c6" stroke="#6f5a98" stroke-width="0.5"/></svg>
<svg class="b" style="left:334.5px;top:993px" width="26" height="26" viewBox="0 0 26 26"><rect x="0" y="0" width="26" height="26" fill="#222222"/><rect x="0.5" y="0.5" width="25" height="25" fill="url(#dotp)" stroke="#0e0e0e" stroke-width="1"/><path d="M3 6L8 4V18L3 20.5Z M10.5 3.5L14 6V20L10.5 18Z" fill="#4fa3e0" stroke="#a9c4dc" stroke-width="0.7"/><path d="M9.2 1.5V22.5" stroke="#e8e8e8" stroke-width="0.9" stroke-dasharray="2 1.4"/><path d="M13.8 12.8h9l-3 3.8v6.2h-3v-6.2z" fill="#9d86c6" stroke="#6f5a98" stroke-width="0.5"/></svg>
<svg class="b" style="left:361.5px;top:993px" width="26" height="26" viewBox="0 0 26 26"><rect x="0" y="0" width="26" height="26" fill="#222222"/><rect x="0.5" y="0.5" width="25" height="25" fill="url(#dotp)" stroke="#0e0e0e" stroke-width="1"/><rect x="5.5" y="6" width="6" height="6" fill="#4fa3e0" stroke="#b4c0cc" stroke-width="0.9"/><path d="M13.8 12.8h9l-3 3.8v6.2h-3v-6.2z" fill="#9d86c6" stroke="#6f5a98" stroke-width="0.5"/></svg>
<svg class="b" style="left:388.5px;top:993px" width="26" height="26" viewBox="0 0 26 26"><rect x="0" y="0" width="26" height="26" fill="#222222"/><rect x="0.5" y="0.5" width="25" height="25" fill="url(#dotp)" stroke="#0e0e0e" stroke-width="1"/><path d="M5 5.5H19" stroke="#2c7fd0" stroke-width="2.4"/><path d="M5 5.5H19" stroke="#bfe0ff" stroke-width="0.7" stroke-dasharray="1 1"/><path d="M5 6V19.5" stroke="#bdbdbd" stroke-width="1.6"/><rect x="3.4" y="3.8" width="3.2" height="3.2" fill="#fff"/><rect x="17.4" y="3.8" width="3.2" height="3.2" fill="#fff"/><rect x="3.4" y="17.8" width="3.2" height="3.2" fill="#fff"/><path d="M13.8 12.8h9l-3 3.8v6.2h-3v-6.2z" fill="#9d86c6" stroke="#6f5a98" stroke-width="0.5"/></svg>
<svg class="b" style="left:418px;top:995px" width="24" height="24" viewBox="0 0 24 24"><path d="M3 19L17 4" stroke="#6a6a6e" stroke-width="3.4" stroke-linecap="round"/><path d="M3 19L17 4" stroke="#4c4c4c" stroke-width="1.4" stroke-linecap="round"/><path d="M13 13h8l-2.7 3.2v4.8h-2.6v-4.8z" fill="#5f5f62" stroke="#6c6c70" stroke-width="0.5"/></svg>
<svg class="b" style="left:442px;top:993px" width="26" height="26" viewBox="0 0 26 26"><rect x="0" y="0" width="26" height="26" fill="#222222"/><rect x="0.5" y="0.5" width="25" height="25" fill="url(#dotp)" stroke="#0e0e0e" stroke-width="1"/><circle cx="11" cy="12" r="6.2" fill="none" stroke="#8e98a4" stroke-width="2"/><circle cx="11" cy="12" r="2.6" fill="#4fa3e0"/><path d="M11 2.5V6.5M11 17.5V21.5M2 12H6M16 12H20" stroke="#2c7fd0" stroke-width="1.8"/><path d="M13.8 12.8h9l-3 3.8v6.2h-3v-6.2z" fill="#9d86c6" stroke="#6f5a98" stroke-width="0.5"/></svg>
<svg class="b" style="left:469px;top:993px" width="26" height="26" viewBox="0 0 26 26"><rect x="0" y="0" width="26" height="26" fill="#222222"/><rect x="0.5" y="0.5" width="25" height="25" fill="url(#dotp)" stroke="#0e0e0e" stroke-width="1"/><rect x="5" y="4" width="3.6" height="14.5" fill="#f2f2f2"/><rect x="10" y="7" width="8.5" height="8.5" fill="#f2f2f2"/><path d="M2.5 11.5H21" stroke="#2c7fd0" stroke-width="1.2" stroke-dasharray="2.2 1.2"/><path d="M13.8 12.8h9l-3 3.8v6.2h-3v-6.2z" fill="#9d86c6" stroke="#6f5a98" stroke-width="0.5"/></svg>
<svg class="b" style="left:496px;top:993px" width="26" height="26" viewBox="0 0 26 26"><rect x="0" y="0" width="26" height="26" fill="#222222"/><rect x="0.5" y="0.5" width="25" height="25" fill="url(#dotp)" stroke="#0e0e0e" stroke-width="1"/><g transform="rotate(-38 11 11)"><rect x="3.5" y="6" width="15" height="9" fill="#2a2a2a" stroke="#f2f2f2" stroke-width="1.1"/><path d="M5.5 6.5v3M8 6.5v2M10.5 6.5v3M13 6.5v2M15.5 6.5v3" stroke="#f2f2f2" stroke-width="0.9"/><rect x="3.5" y="13.2" width="15" height="2.2" fill="#2c7fd0"/></g><path d="M13.8 12.8h9l-3 3.8v6.2h-3v-6.2z" fill="#9d86c6" stroke="#6f5a98" stroke-width="0.5"/></svg>
<svg class="b" style="left:523px;top:993px" width="26" height="26" viewBox="0 0 26 26"><rect x="0" y="0" width="26" height="26" fill="#222222"/><rect x="0.5" y="0.5" width="25" height="25" fill="url(#dotp)" stroke="#0e0e0e" stroke-width="1"/><path d="M2.5 11.5H8L11 19.5L16.5 3.5H21.5" fill="none" stroke="#8a8a8e" stroke-width="1.6" stroke-linejoin="round"/><path d="M4 11.5L8 19.5H11" fill="none" stroke="#8a8a8e" stroke-width="1.2"/><path d="M13.8 12.8h9l-3 3.8v6.2h-3v-6.2z" fill="#9d86c6" stroke="#6f5a98" stroke-width="0.5"/></svg>
<svg class="b" style="left:550px;top:993px" width="26" height="26" viewBox="0 0 26 26"><rect x="0" y="0" width="26" height="26" fill="#222222"/><rect x="0.5" y="0.5" width="25" height="25" fill="url(#dotp)" stroke="#0e0e0e" stroke-width="1"/><rect x="3" y="4" width="7.4" height="7.4" fill="#f2f2f2"/><rect x="11.6" y="4" width="8.4" height="7.4" fill="#f2f2f2"/><rect x="4.6" y="6.4" width="4.2" height="2.6" rx="1" fill="none" stroke="#222" stroke-width="0.9"/><path d="M13.2 6v3.6h1.4v-3.6zM15.6 9.2h0.6M17.2 6h1.6v1.6h-1.2h1.2v2h-1.6" fill="none" stroke="#222" stroke-width="0.8"/><path d="M13.8 12.8h9l-3 3.8v6.2h-3v-6.2z" fill="#9d86c6" stroke="#6f5a98" stroke-width="0.5"/></svg>
<svg class="b" style="left:577px;top:993px" width="26" height="26" viewBox="0 0 26 26"><rect x="0" y="0" width="26" height="26" fill="#222222"/><rect x="0.5" y="0.5" width="25" height="25" fill="url(#dotp)" stroke="#0e0e0e" stroke-width="1"/><circle cx="12.5" cy="8.5" r="5.6" fill="#f2f2f2" stroke="#c8c8c8" stroke-width="0.8"/><path d="M8.5 13L3 19.5" stroke="#d8d8d8" stroke-width="2.2" stroke-linecap="round"/><path d="M10.4 11.5V5.5L14.6 11.5V5.5" fill="none" stroke="#222" stroke-width="1.2"/><path d="M13.8 12.8h9l-3 3.8v6.2h-3v-6.2z" fill="#9d86c6" stroke="#6f5a98" stroke-width="0.5"/></svg>
<svg class="b" style="left:604px;top:993px" width="26" height="26" viewBox="0 0 26 26"><rect x="0" y="0" width="26" height="26" fill="#222222"/><rect x="0.5" y="0.5" width="25" height="25" fill="url(#dotp)" stroke="#0e0e0e" stroke-width="1"/><rect x="4" y="3" width="11.5" height="12" fill="#f2f2f2"/><path d="M6 13.5L9.7 4.5L13.4 13.5M7.4 10.4H12" fill="none" stroke="#111" stroke-width="1.6"/><path d="M6 20.5L9.5 16.5L13 20.5Z" fill="none" stroke="#c8c0dc" stroke-width="1"/><path d="M13.8 12.8h9l-3 3.8v6.2h-3v-6.2z" fill="#9d86c6" stroke="#6f5a98" stroke-width="0.5"/></svg>
<svg class="b" style="left:631px;top:993px" width="26" height="26" viewBox="0 0 26 26"><rect x="0" y="0" width="26" height="26" fill="#222222"/><rect x="0.5" y="0.5" width="25" height="25" fill="url(#dotp)" stroke="#0e0e0e" stroke-width="1"/><path d="M2.5 15.5L7 7H12L13.5 12L20 5.5V12" fill="none" stroke="#77777b" stroke-width="2.2" stroke-linejoin="round"/><path d="M9 11l2 3.4l2-3.4z" fill="#9a9a9e"/><path d="M13.8 12.8h9l-3 3.8v6.2h-3v-6.2z" fill="#9d86c6" stroke="#6f5a98" stroke-width="0.5"/></svg>
<svg class="b" style="left:658px;top:993px" width="26" height="26" viewBox="0 0 26 26"><rect x="0" y="0" width="26" height="26" fill="#222222"/><rect x="0.5" y="0.5" width="25" height="25" fill="url(#dotp)" stroke="#0e0e0e" stroke-width="1"/><path d="M6 9.5A6 5.4 0 0 1 18 9.5Z" fill="#f2f2f2"/><rect x="6.5" y="10.6" width="11.5" height="5" fill="#2a2a2a" stroke="#f2f2f2" stroke-width="0.8"/><path d="M9 15l1.8-3.6L12.6 15M14.4 11.4V15" stroke="#f2f2f2" stroke-width="0.9" fill="none"/><path d="M7 14.5L3 19.5" stroke="#d8d8d8" stroke-width="2" stroke-linecap="round"/><path d="M13.8 12.8h9l-3 3.8v6.2h-3v-6.2z" fill="#9d86c6" stroke="#6f5a98" stroke-width="0.5"/></svg>
<svg class="b" style="left:685px;top:993px" width="26" height="26" viewBox="0 0 26 26"><rect x="0" y="0" width="26" height="26" fill="#222222"/><rect x="0.5" y="0.5" width="25" height="25" fill="url(#dotp)" stroke="#0e0e0e" stroke-width="1"/><rect x="6.5" y="3" width="9" height="12" fill="#e2e2e2"/><rect x="8" y="3" width="3" height="12" fill="#fafafa"/><path d="M6.5 15L11 20L15.5 15Z" fill="#d0d0d0"/><path d="M3.5 3V15M18.5 3V15" stroke="#9a9a9a" stroke-width="1.8" stroke-dasharray="2 1"/><path d="M4 15.4H19" stroke="#111" stroke-width="1" stroke-dasharray="2 1.2"/><path d="M13.8 12.8h9l-3 3.8v6.2h-3v-6.2z" fill="#9d86c6" stroke="#6f5a98" stroke-width="0.5"/></svg>
<svg class="b" style="left:712px;top:993px" width="26" height="26" viewBox="0 0 26 26"><rect x="0" y="0" width="26" height="26" fill="#222222"/><rect x="0.5" y="0.5" width="25" height="25" fill="url(#dotp)" stroke="#0e0e0e" stroke-width="1"/><rect x="4" y="4" width="13" height="13" fill="#f2f2f2"/><path d="M6 15.5L9.6 6.5L13.2 15.5M7.4 12.4H11.8" fill="none" stroke="#222" stroke-width="1.4"/><circle cx="15" cy="6.6" r="1.6" fill="none" stroke="#222" stroke-width="0.9"/><path d="M13.8 12.8h9l-3 3.8v6.2h-3v-6.2z" fill="#9d86c6" stroke="#6f5a98" stroke-width="0.5"/></svg>
<svg class="b" style="left:739px;top:993px" width="26" height="26" viewBox="0 0 26 26"><rect x="0" y="0" width="26" height="26" fill="#222222"/><rect x="0.5" y="0.5" width="25" height="25" fill="url(#dotp)" stroke="#0e0e0e" stroke-width="1"/><circle cx="11" cy="12" r="7.4" fill="#1c1c1c" stroke="#8a8a90" stroke-width="1.2"/><path d="M11 12V4.6A7.4 7.4 0 0 0 3.6 12Z" fill="#f2f2f2"/><path d="M11 12V19.4A7.4 7.4 0 0 0 18.4 12Z" fill="#f2f2f2"/><path d="M13.8 12.8h9l-3 3.8v6.2h-3v-6.2z" fill="#9d86c6" stroke="#6f5a98" stroke-width="0.5"/></svg>
<svg class="b" style="left:766px;top:993px" width="26" height="26" viewBox="0 0 26 26"><rect x="0" y="0" width="26" height="26" fill="#222222"/><rect x="0.5" y="0.5" width="25" height="25" fill="url(#dotp)" stroke="#0e0e0e" stroke-width="1"/><path d="M2 8.5H13" stroke="#f2f2f2" stroke-width="2.2"/><rect x="11.5" y="3.5" width="9" height="9.5" fill="#4fa3e0" stroke="#dfe8f0" stroke-width="1"/><path d="M13.5 11l4-5.5" stroke="#1c5ea8" stroke-width="1.2"/><path d="M13.8 12.8h9l-3 3.8v6.2h-3v-6.2z" fill="#9d86c6" stroke="#6f5a98" stroke-width="0.5"/></svg>
<svg class="b" style="left:793px;top:993px" width="26" height="26" viewBox="0 0 26 26"><rect x="0" y="0" width="26" height="26" fill="#222222"/><rect x="0.5" y="0.5" width="25" height="25" fill="url(#dotp)" stroke="#0e0e0e" stroke-width="1"/><path d="M2 8.5H22" stroke="#f2f2f2" stroke-width="2.2"/><rect x="7.5" y="3.5" width="9" height="9.5" fill="#4fa3e0" stroke="#dfe8f0" stroke-width="1"/><path d="M9.5 11l4-5.5" stroke="#1c5ea8" stroke-width="1.2"/><path d="M13.8 12.8h9l-3 3.8v6.2h-3v-6.2z" fill="#9d86c6" stroke="#6f5a98" stroke-width="0.5"/></svg>
<svg class="b" style="left:844px;top:995px" width="22" height="24" viewBox="0 0 22 24"><rect x="5" y="6" width="14" height="14" fill="#5e5e60"/><path d="M8 18L11.6 9L15.2 18M9.4 15H13.8" fill="none" stroke="#707074" stroke-width="1.5"/><circle cx="16.6" cy="9" r="1.5" fill="none" stroke="#707074" stroke-width="0.9"/><path d="M3.5 0.5v6M0.5 3.5h6M1.4 1.4l4.2 4.2M5.6 1.4L1.4 5.6" stroke="#707074" stroke-width="0.8"/></svg>
<svg class="b" style="left:873px;top:995px" width="22" height="24" viewBox="0 0 22 24"><rect x="1" y="3" width="14" height="14" fill="#5e5e60"/><path d="M3.5 15L7 6L10.5 15M4.8 12H9.2" fill="none" stroke="#707074" stroke-width="1.5"/><circle cx="12.4" cy="6" r="1.5" fill="none" stroke="#707074" stroke-width="0.9"/><path d="M17 5L20 8L10 20L6.5 21L7.5 17.5Z" fill="#565658" stroke="#707074" stroke-width="0.9"/></svg>
<svg class="b" style="left:900px;top:995px" width="22" height="24" viewBox="0 0 22 24"><rect x="1" y="3" width="14" height="14" fill="#5e5e60"/><path d="M3.5 15L7 6L10.5 15M4.8 12H9.2" fill="none" stroke="#707074" stroke-width="1.5"/><circle cx="12.4" cy="6" r="1.5" fill="none" stroke="#707074" stroke-width="0.9"/><path d="M13 13L17 17L19 15V21H13L15 19L11 15Z" fill="#68686c"/></svg>
<svg class="b" style="left:720px;top:143px" width="20" height="21" viewBox="0 0 20 21"><path d="M1 14.5L10.5 11L19 14.5L8.5 19.5Z" fill="#58a8e0" stroke="#6d8296" stroke-width="0.7"/><path d="M10 15.5V3.5" stroke="#4a4a4a" stroke-width="1.8"/><path d="M6.6 5.2L10 1L13.4 5.2Z" fill="#4a4a4a"/></svg>
<svg class="b" style="left:746px;top:144px" width="20" height="20" viewBox="0 0 20 20"><g fill="none" stroke="#dedfe3" stroke-width="1.4"><path d="M10 1.5V15M3 5.5H17M1.5 10.5A3 2.4 0 0 0 7.5 10.5ZM12.5 10.5A3 2.4 0 0 0 18.5 10.5Z"/><path d="M4.5 5.5L1.8 10.5M4.5 5.5L7.2 10.5M15.5 5.5L12.8 10.5M15.5 5.5L18.2 10.5" stroke-width="0.7"/></g><path d="M6 18.5C6 15.5 14 15.5 14 18.5Z" fill="#e4e5e9"/></svg>
<svg class="b" style="left:772px;top:143px" width="20" height="21" viewBox="0 0 20 21"><path d="M5 6C5 2 9 1.5 13 1.5H17.5V13L12 16H7.5C5.5 14 5 10 5 6Z" fill="#5cade4" stroke="#4a6f9a" stroke-width="0.9"/><circle cx="12.4" cy="8" r="4.3" fill="#7cc4f0" stroke="#3a6a9a" stroke-width="0.8"/><circle cx="12.8" cy="8.2" r="2.3" fill="#f2b24a" stroke="#b87a1a" stroke-width="0.6"/><path d="M2 16.5L8 13L9 15L3.5 18.5Z" fill="#f2b24a" stroke="#7a6a4a" stroke-width="0.7"/><ellipse cx="2.2" cy="17.6" rx="1.4" ry="2" fill="#e8e8e8" stroke="#666" stroke-width="0.7"/></svg>
<svg class="b" style="left:798px;top:143px" width="21" height="21" viewBox="0 0 21 21"><path d="M7.5 12.5L2 19" stroke="#5aa0d0" stroke-width="2.6" stroke-linecap="round"/><path d="M7.5 12.5L2 19" stroke="#7d8790" stroke-width="3.6" stroke-linecap="round" stroke-opacity="0.35"/><circle cx="12.5" cy="7.5" r="6.2" fill="#eef0f3" stroke="#8a8e96" stroke-width="1.3"/><path d="M12.5 2.6l1.6 2.2h-3.2zM12.5 12.4l1.6-2.2h-3.2zM7.6 7.5l2.2-1.6v3.2zM17.4 7.5l-2.2-1.6v3.2z" fill="#585c64"/></svg>
<svg class="b" style="left:824px;top:143px" width="21" height="21" viewBox="0 0 21 21"><rect x="6.5" y="0.8" width="12.5" height="12.5" fill="none" stroke="#4a4a4a" stroke-width="1" stroke-dasharray="2.4 1.8"/><path d="M7 13L1.8 19.2" stroke="#5aa0d0" stroke-width="2.6" stroke-linecap="round"/><circle cx="11.5" cy="8" r="6" fill="#e9ebef" stroke="#9a9ea6" stroke-width="1.2"/></svg>
<svg class="b" style="left:850px;top:144px" width="21" height="20" viewBox="0 0 21 20"><path d="M1 12L13 2.5L16 6L4.5 17Z" fill="#dadce0" stroke="#8a8e96" stroke-width="0.9"/><path d="M13 2.5L16.5 0.8L18.6 3.6L16 6Z" fill="#bcbfc6" stroke="#8a8e96" stroke-width="0.7"/><ellipse cx="3" cy="14.5" rx="2.4" ry="3" fill="#f0f0f2" stroke="#8a8e96" stroke-width="0.8" transform="rotate(-40 3 14.5)"/><path d="M19 13.5H12.5" stroke="#3e8fc8" stroke-width="2.4"/><path d="M13.5 9.8L9 13.5L13.5 17.2Z" fill="#3e8fc8"/></svg>
<svg class="b" style="left:876px;top:144px" width="20" height="20" viewBox="0 0 20 20"><path d="M1.5 6C1.5 2 8 2 8 5.5C8 2 18.5 1 18.5 5.5V15C18.5 19 12 18.5 11 16.5C10 19 1.5 19.5 1.5 15Z" fill="#e6e7ea" stroke="#d4d6da" stroke-width="0.8"/><path d="M3 9l4-3M3 12l4-3M3 15l4-3M13 12l4-3M13 15l4-3" stroke="#d0d2d6" stroke-width="1"/></svg>
<svg class="b" style="left:902px;top:143px" width="20" height="21" viewBox="0 0 20 21"><path d="M1 6.5L7 1.5H19V14L13.5 19.5H1Z" fill="#e8eaee" stroke="#6a7a8a" stroke-width="0.9"/><rect x="1" y="6.5" width="12.5" height="13" fill="#58a8e0" stroke="#4a6f9a" stroke-width="0.8"/><path d="M13.5 6.5L19 1.5" stroke="#6a7a8a" stroke-width="0.8"/><path d="M8.5 1v3.4M7 3l1.5 1.6L10 3M16 9h3M17.4 7.6L19 9l-1.6 1.4" stroke="#333" stroke-width="0.9" fill="none"/></svg>
<svg class="b" style="left:5px;top:900px" width="40" height="52" viewBox="0 0 40 52"><text x="12" y="9" font-family="Liberation Sans" font-size="8.5" fill="#6aa79a" font-weight="700">Y</text>
<path d="M2.2 13.2L6.8 18.8M6.8 13.2L2.2 18.8" stroke="#e8902a" stroke-width="1.5"/>
<path d="M17 10L20.5 7.2L24 7.2L27 10.5L33.5 12.5L35.8 14.8L34 16.4L22 16L18 14Z" fill="#0f6a14"/>
<path d="M10.2 16.5L16 12.6L18 14L22 16L31.5 16.2L31 18L22.5 18.8L19 20.8L14 20.5Z" fill="#8a3412"/>
<path d="M11 17L15.5 14L17.5 20Z" fill="#e8902a" fill-opacity="0.75"/>
<rect x="32.2" y="15" width="3.8" height="4" fill="#0b0b5c"/>
<rect x="32.4" y="19" width="3.4" height="16.5" fill="#2d6fd0"/>
<path d="M30.4 34.8H37.8L34.1 39.2Z" fill="#0b0b5c"/>
<path d="M32 41H36.4L32 49H36.6" fill="none" stroke="#1d4fb8" stroke-width="1.3"/></svg>
<div class="b" style="left:905px;top:1px;width:975px;height:33px;background:linear-gradient(to right,#464646,#3e3e3e 30px);"></div>
<span class="t" style="left:1114.20px;top:12px;font-size:11.75px;color:#9c9c9c;letter-spacing:-0.955px;">PARAMETRIC HATCH.SLDPRT *</span>
<div class="b" style="left:1502px;top:6px;width:202px;height:22px;background:linear-gradient(#f6f6f6,#dcdcdc);border:1px solid #bdbdbd;box-sizing:border-box;"></div>
<div class="b" style="left:1509px;top:10px;width:14px;height:14px;background:#1c1c1c;"></div>
<svg class="b" style="left:1509px;top:10px" width="14" height="14" viewBox="0 0 14 14"><path d="M3 3L9 8L3 11" fill="none" stroke="#e0e0e0" stroke-width="1.4"/></svg>
<span class="t" style="left:1529.30px;top:14px;font-size:11.75px;color:#8c8c8c;letter-spacing:-0.425px;">Search Commands</span>
<svg class="b" style="left:1672px;top:10px" width="14" height="14" viewBox="0 0 14 14"><circle cx="6.5" cy="6.5" r="5" fill="none" stroke="#8a8a8a" stroke-width="1.2"/></svg>
<svg class="b" style="left:1715px;top:8px" width="20" height="20" viewBox="0 0 20 20"><circle cx="10" cy="10" r="8.6" fill="none" stroke="#e6e6e6" stroke-width="1.6"/><circle cx="10" cy="10" r="4" fill="none" stroke="#e6e6e6" stroke-width="1.6"/></svg>
<svg class="b" style="left:1751px;top:8px" width="20" height="20" viewBox="0 0 20 20"><circle cx="10" cy="10" r="8.6" fill="none" stroke="#e6e6e6" stroke-width="1.6"/><path d="M6.6 8.2C6.6 4.6 13.4 4.6 13.4 8.2C13.4 10.4 10 10.6 10 13" fill="none" stroke="#e6e6e6" stroke-width="1.8"/></svg>
<svg class="b" style="left:1825px;top:11px" width="16" height="14" viewBox="0 0 16 14"><rect x="0.8" y="0.8" width="14.4" height="12" fill="none" stroke="#e8e8e8" stroke-width="1.6"/><path d="M8 1V13" stroke="#e8e8e8" stroke-width="1.4"/></svg>
<svg class="b" style="left:1866px;top:11px" width="14" height="14" viewBox="0 0 14 14"><rect x="0.8" y="0.8" width="12" height="12" fill="none" stroke="#e8e8e8" stroke-width="1.6"/></svg>
<div class="b" style="left:1879px;top:1px;width:1px;height:115px;background:#3c3c3c;"></div>
<div class="b" style="left:1879px;top:116px;width:1px;height:17px;background:#8a8a8a;"></div>
<div class="b" style="left:1879px;top:133px;width:1px;height:839px;background:#dadada;"></div>
<div class="b" style="left:1879px;top:972px;width:1px;height:49px;background:#464646;"></div>
<div class="b" style="left:1878px;top:17px;width:1px;height:1011px;background:#505050;"></div>
<div class="b" style="left:922px;top:17px;width:956px;height:1011px;background:#f0f0f0;box-shadow:0 3px 12px 2px rgba(0,0,0,0.5);"></div>
<div class="b" style="left:922px;top:17px;width:956px;height:30px;background:#ffffff;"></div>
<span class="t" style="left:930.20px;top:26px;font-size:11.75px;color:#000;letter-spacing:-0.054px;">Equations, Global Variables, and Dimensions</span>
<div class="b" style="left:945px;top:52px;width:24px;height:24px;background:#2b2b2b;box-sizing:border-box;border:1px solid #000;outline:1px solid #fff;"></div>
<div class="b" style="left:972px;top:52px;width:24px;height:24px;background:#f0f0f0;box-sizing:border-box;border:1px solid #000;outline:1px solid #fff;"></div>
<div class="b" style="left:999px;top:52px;width:24px;height:24px;background:#f0f0f0;box-sizing:border-box;border:1px solid #000;outline:1px solid #fff;"></div>
<div class="b" style="left:1026px;top:52px;width:24px;height:24px;background:#f0f0f0;box-sizing:border-box;border:1px solid #000;outline:1px solid #fff;"></div>
<div class="b" style="left:1063px;top:54px;width:173px;height:20px;background:#fff;box-sizing:border-box;border:1px solid #7a7a7a;"></div>
<span class="t" style="left:1086.30px;top:58px;font-size:11.75px;color:#000;letter-spacing:-0.070px;">Filter All Fields</span>
<div class="b" style="left:923px;top:83px;width:858px;height:883px;background:#ffffff;box-sizing:border-box;border-top:2px solid #828790;border-left:1px solid #a0a0a8;border-right:1px solid #e3e3e3;border-bottom:1px solid #fff;"></div>
<div class="b" style="left:0;top:0;width:1880px;height:1040px;clip-path:inset(85px 117px 75px 924px);background:transparent"><div class="b" style="left:924px;top:85px;width:839px;height:880px;background:#fff"></div><div class="b" style="left:924px;top:85px;width:839px;height:25px;background:#f0f0f0;box-shadow:inset 0 1px 0 #fafafa;"></div><div class="b" style="left:924px;top:110px;width:839px;height:1px;background:#000;"></div><div class="b" style="left:1127px;top:85px;width:1px;height:25px;background:#000;"></div><div class="b" style="left:1440px;top:85px;width:1px;height:25px;background:#000;"></div><div class="b" style="left:1522px;top:85px;width:1px;height:25px;background:#000;"></div><span class="t" style="left:957.50px;top:92px;font-size:11.75px;color:#000;letter-spacing:-0.126px;font-weight:700;">Name</span><span class="t" style="left:1129.70px;top:92px;font-size:11.75px;color:#000;letter-spacing:-0.178px;font-weight:700;">Value / Equation</span><span class="t" style="left:1443.50px;top:92px;font-size:11.75px;color:#000;letter-spacing:-0.494px;font-weight:700;">Evaluates to</span><span class="t" style="left:1525.10px;top:92px;font-size:11.75px;color:#000;letter-spacing:-0.440px;font-weight:700;">Comments</span><div class="b" style="left:955px;top:111px;width:808px;height:19px;background:#e6e6e6;"></div><div class="b" style="left:962px;top:118px;width:9px;height:9px;box-sizing:border-box;border:1px solid #8e8e8e;border-radius:2px;background:linear-gradient(#ffffff,#e4e4e4)"></div><div class="b" style="left:964px;top:122px;width:5px;height:1px;background:#2b62c0;"></div><span class="t" style="left:977.00px;top:117px;font-size:11.75px;color:#000;letter-spacing:-0.408px;font-weight:700;">Global Variables</span><div class="b" style="left:954px;top:130px;width:809px;height:1px;background:#6f6f6f;"></div><span class="t" style="left:987.70px;top:133px;font-size:10.5px;color:#000;letter-spacing:-0.067px;">"C.O. LENGTH"</span><div class="b" style="left:1128px;top:131px;width:312px;height:15px;overflow:hidden"><span class="t" style="left:1.70px;top:2px;font-size:11.0px;color:#000;letter-spacing:0.022px;">= 2500</span></div><span class="t" style="left:1443.20px;top:133px;font-size:10.5px;color:#000;letter-spacing:0.036px;">2500</span><div class="b" style="left:954px;top:146px;width:809px;height:1px;background:#6f6f6f;"></div><span class="t" style="left:987.70px;top:149px;font-size:10.5px;color:#000;letter-spacing:0.124px;">"C.O. WIDTH"</span><div class="b" style="left:1128px;top:147px;width:312px;height:15px;overflow:hidden"><span class="t" style="left:1.70px;top:2px;font-size:11.0px;color:#000;letter-spacing:0.022px;">= 2500</span></div><span class="t" style="left:1443.20px;top:149px;font-size:10.5px;color:#000;letter-spacing:0.036px;">2500</span><div class="b" style="left:954px;top:162px;width:809px;height:1px;background:#6f6f6f;"></div><span class="t" style="left:987.70px;top:165px;font-size:10.5px;color:#000;letter-spacing:0.092px;">"TOTAL HEIGHT"</span><div class="b" style="left:1128px;top:163px;width:312px;height:15px;overflow:hidden"><span class="t" style="left:1.70px;top:2px;font-size:11.0px;color:#000;letter-spacing:0.059px;">= 500</span></div><span class="t" style="left:1443.20px;top:165px;font-size:10.5px;color:#000;letter-spacing:0.011px;">500</span><div class="b" style="left:954px;top:178px;width:809px;height:1px;background:#6f6f6f;"></div><span class="t" style="left:987.70px;top:181px;font-size:10.5px;color:#000;letter-spacing:-0.134px;">"OFFSET H.IP. LENGTH"</span><div class="b" style="left:1128px;top:179px;width:312px;height:15px;overflow:hidden"><span class="t" style="left:1.70px;top:2px;font-size:11.0px;color:#000;letter-spacing:0.059px;">= 250</span></div><span class="t" style="left:1443.20px;top:181px;font-size:10.5px;color:#000;letter-spacing:0.011px;">250</span><div class="b" style="left:954px;top:194px;width:809px;height:1px;background:#6f6f6f;"></div><span class="t" style="left:987.70px;top:197px;font-size:10.5px;color:#000;letter-spacing:-0.046px;">"OFFSET H.I.P. WIDTH"</span><div class="b" style="left:1128px;top:195px;width:312px;height:15px;overflow:hidden"><span class="t" style="left:1.70px;top:2px;font-size:11.0px;color:#000;letter-spacing:0.059px;">= 250</span></div><span class="t" style="left:1443.20px;top:197px;font-size:10.5px;color:#000;letter-spacing:0.011px;">250</span><div class="b" style="left:954px;top:210px;width:809px;height:1px;background:#6f6f6f;"></div><span class="t" style="left:987.70px;top:213px;font-size:10.5px;color:#000;letter-spacing:0.036px;">"H.I.P. DISTANCE"</span><div class="b" style="left:1128px;top:211px;width:312px;height:15px;overflow:hidden"><span class="t" style="left:1.70px;top:2px;font-size:11.0px;color:#000;letter-spacing:0.059px;">= 180</span></div><span class="t" style="left:1443.20px;top:213px;font-size:10.5px;color:#000;letter-spacing:0.011px;">180</span><div class="b" style="left:954px;top:226px;width:809px;height:1px;background:#6f6f6f;"></div><span class="t" style="left:987.70px;top:229px;font-size:10.5px;color:#000;letter-spacing:-0.013px;">"HATCH DEEP"</span><div class="b" style="left:1128px;top:227px;width:312px;height:15px;overflow:hidden"><span class="t" style="left:1.70px;top:2px;font-size:11.0px;color:#000;letter-spacing:0.059px;">= 200</span></div><span class="t" style="left:1443.20px;top:229px;font-size:10.5px;color:#000;letter-spacing:0.011px;">200</span><div class="b" style="left:954px;top:242px;width:809px;height:1px;background:#6f6f6f;"></div><span class="t" style="left:987.70px;top:245px;font-size:10.5px;color:#000;letter-spacing:0.050px;">"TOTAL HATCH DEEP"</span><div class="b" style="left:1128px;top:243px;width:312px;height:15px;overflow:hidden"><span class="t" style="left:1.70px;top:2px;font-size:11.0px;color:#000;letter-spacing:0.059px;">= 300</span></div><span class="t" style="left:1443.20px;top:245px;font-size:10.5px;color:#000;letter-spacing:0.011px;">300</span><div class="b" style="left:954px;top:258px;width:809px;height:1px;background:#6f6f6f;"></div><span class="t" style="left:987.70px;top:261px;font-size:10.5px;color:#000;letter-spacing:0.081px;">"GAP"</span><div class="b" style="left:1128px;top:259px;width:312px;height:15px;overflow:hidden"><span class="t" style="left:1.70px;top:2px;font-size:11.0px;color:#000;letter-spacing:0.116px;">= 40</span></div><span class="t" style="left:1443.20px;top:261px;font-size:10.5px;color:#000;letter-spacing:-0.039px;">40</span><div class="b" style="left:954px;top:274px;width:809px;height:1px;background:#6f6f6f;"></div><span class="t" style="left:987.70px;top:277px;font-size:10.5px;color:#000;letter-spacing:-0.148px;">"GAP SEAL"</span><div class="b" style="left:1128px;top:275px;width:312px;height:15px;overflow:hidden"><span class="t" style="left:1.70px;top:2px;font-size:11.0px;color:#000;letter-spacing:0.116px;">= 20</span></div><span class="t" style="left:1443.20px;top:277px;font-size:10.5px;color:#000;letter-spacing:-0.039px;">20</span><div class="b" style="left:954px;top:290px;width:809px;height:1px;background:#6f6f6f;"></div><span class="t" style="left:987.70px;top:293px;font-size:10.5px;color:#000;letter-spacing:-0.035px;">"OUTSIDE RADIUS"</span><div class="b" style="left:1128px;top:291px;width:312px;height:15px;overflow:hidden"><span class="t" style="left:1.70px;top:2px;font-size:11.0px;color:#000;letter-spacing:0.059px;">= 150</span></div><span class="t" style="left:1443.20px;top:293px;font-size:10.5px;color:#000;letter-spacing:0.011px;">150</span><div class="b" style="left:954px;top:306px;width:809px;height:1px;background:#6f6f6f;"></div><span class="t" style="left:987.70px;top:309px;font-size:10.5px;color:#000;letter-spacing:0.014px;">"INSIDE RADIUS"</span><div class="b" style="left:1128px;top:307px;width:312px;height:15px;overflow:hidden"><span class="t" style="left:1.70px;top:2px;font-size:11.0px;color:#000;letter-spacing:0.059px;">= 100</span></div><span class="t" style="left:1443.20px;top:309px;font-size:10.5px;color:#000;letter-spacing:0.011px;">100</span><div class="b" style="left:954px;top:322px;width:809px;height:1px;background:#6f6f6f;"></div><span class="t" style="left:987.70px;top:325px;font-size:10.5px;color:#000;letter-spacing:-0.196px;">"SHELL PLATE"</span><div class="b" style="left:1128px;top:323px;width:312px;height:15px;overflow:hidden"><span class="t" style="left:1.70px;top:2px;font-size:11.25px;color:#000;letter-spacing:0.092px;">= 8</span></div><span class="t" style="left:1443.20px;top:325px;font-size:10.5px;color:#000;">8</span><span class="t" style="left:1525.00px;top:325px;font-size:11.25px;color:#000;letter-spacing:0.080px;">Shell plate thickness</span><div class="b" style="left:954px;top:338px;width:809px;height:1px;background:#6f6f6f;"></div><span class="t" style="left:987.70px;top:341px;font-size:10.5px;color:#000;letter-spacing:0.044px;">"OUT. PLATE"</span><div class="b" style="left:1128px;top:339px;width:312px;height:15px;overflow:hidden"><span class="t" style="left:1.70px;top:2px;font-size:11.25px;color:#000;letter-spacing:0.092px;">= 8</span></div><span class="t" style="left:1443.20px;top:341px;font-size:10.5px;color:#000;">8</span><span class="t" style="left:1525.00px;top:341px;font-size:11.5px;color:#000;letter-spacing:0.043px;">Outside plate thickness</span><div class="b" style="left:954px;top:354px;width:809px;height:1px;background:#6f6f6f;"></div><span class="t" style="left:987.70px;top:357px;font-size:10.5px;color:#000;letter-spacing:0.012px;">"IN. PLATE"</span><div class="b" style="left:1128px;top:355px;width:312px;height:15px;overflow:hidden"><span class="t" style="left:1.70px;top:2px;font-size:11.25px;color:#000;letter-spacing:0.092px;">= 8</span></div><span class="t" style="left:1443.20px;top:357px;font-size:10.5px;color:#000;">8</span><span class="t" style="left:1525.00px;top:357px;font-size:11.5px;color:#000;letter-spacing:0.016px;">Inside plate thickness</span><div class="b" style="left:954px;top:370px;width:809px;height:1px;background:#6f6f6f;"></div><span class="t" style="left:987.70px;top:373px;font-size:10.5px;color:#000;letter-spacing:-0.001px;">"CON. PLATE"</span><div class="b" style="left:1128px;top:371px;width:312px;height:15px;overflow:hidden"><span class="t" style="left:1.70px;top:2px;font-size:11.0px;color:#000;letter-spacing:0.116px;">= 25</span></div><span class="t" style="left:1443.20px;top:373px;font-size:10.5px;color:#000;letter-spacing:-0.039px;">25</span><span class="t" style="left:1525.00px;top:373px;font-size:11.5px;color:#000;letter-spacing:0.063px;">Connection plate thickness</span><div class="b" style="left:954px;top:386px;width:809px;height:1px;background:#6f6f6f;"></div><span class="t" style="left:987.70px;top:389px;font-size:10.5px;color:#000;letter-spacing:0.044px;">"ST."</span><div class="b" style="left:1128px;top:387px;width:312px;height:15px;overflow:hidden"><span class="t" style="left:1.70px;top:2px;font-size:11.25px;color:#000;letter-spacing:0.092px;">= 8</span></div><span class="t" style="left:1443.20px;top:389px;font-size:10.5px;color:#000;">8</span><span class="t" style="left:1525.00px;top:389px;font-size:11.25px;color:#000;letter-spacing:0.085px;">Stiffeners thickness</span><div class="b" style="left:954px;top:402px;width:809px;height:1px;background:#6f6f6f;"></div><span class="t" style="left:987.70px;top:405px;font-size:10.5px;color:#000;letter-spacing:-0.159px;">"TRANSV. STEP"</span><div class="b" style="left:1128px;top:403px;width:312px;height:15px;overflow:hidden"><span class="t" style="left:1.70px;top:2px;font-size:11.0px;color:#000;letter-spacing:0.059px;">= 400</span></div><span class="t" style="left:1443.20px;top:405px;font-size:10.5px;color:#000;letter-spacing:0.011px;">400</span><span class="t" style="left:1525.00px;top:405px;font-size:11.0px;color:#000;letter-spacing:0.072px;">Step</span><div class="b" style="left:954px;top:418px;width:809px;height:1px;background:#6f6f6f;"></div><span class="t" style="left:987.70px;top:421px;font-size:10.5px;color:#000;letter-spacing:0.023px;">"TRANSV. QTY"</span><div class="b" style="left:1128px;top:419px;width:312px;height:15px;overflow:hidden"><span class="t" style="left:1.70px;top:2px;font-size:11.25px;color:#000;letter-spacing:0.074px;">= round ( ( "D3@Sketch21" /</span><span class="t" style="left:149.12px;top:2px;font-size:10.5px;color:#000;letter-spacing:0.050px;">"TRANSV. STEP" ) / 2 ) + 1</span></div><span class="t" style="left:1443.20px;top:421px;font-size:10.5px;color:#000;">4</span><span class="t" style="left:1525.00px;top:421px;font-size:11.5px;color:#000;letter-spacing:0.075px;">Number of transverse stiffeners</span><div class="b" style="left:954px;top:434px;width:809px;height:1px;background:#6f6f6f;"></div><span class="t" style="left:987.70px;top:437px;font-size:10.5px;color:#000;letter-spacing:-0.184px;">"LONG.STEP"</span><div class="b" style="left:1128px;top:435px;width:312px;height:15px;overflow:hidden"><span class="t" style="left:1.70px;top:2px;font-size:11.0px;color:#000;letter-spacing:0.059px;">= 400</span></div><span class="t" style="left:1443.20px;top:437px;font-size:10.5px;color:#000;letter-spacing:0.011px;">400</span><span class="t" style="left:1525.00px;top:437px;font-size:11.0px;color:#000;letter-spacing:0.072px;">Step</span><div class="b" style="left:954px;top:450px;width:809px;height:1px;background:#6f6f6f;"></div><span class="t" style="left:987.70px;top:453px;font-size:10.5px;color:#000;letter-spacing:0.055px;">"LONG. QTY"</span><div class="b" style="left:1128px;top:451px;width:312px;height:15px;overflow:hidden"><span class="t" style="left:1.70px;top:2px;font-size:11.25px;color:#000;letter-spacing:0.074px;">= round ( ( "D1@Sketch24" /</span><span class="t" style="left:149.12px;top:2px;font-size:10.5px;color:#000;letter-spacing:0.065px;">"LONG.STEP" ) / 2 ) + 0</span></div><span class="t" style="left:1443.20px;top:453px;font-size:10.5px;color:#000;">3</span><span class="t" style="left:1525.00px;top:452px;font-size:11.75px;color:#000;letter-spacing:0.110px;">Number of longitudinal stiffeners</span><div class="b" style="left:954px;top:466px;width:809px;height:1px;background:#6f6f6f;"></div><span class="t" style="left:987.70px;top:469px;font-size:10.5px;color:#000;letter-spacing:0.096px;">"HINGE PLT."</span><div class="b" style="left:1128px;top:467px;width:312px;height:15px;overflow:hidden"><span class="t" style="left:1.70px;top:2px;font-size:11.0px;color:#000;letter-spacing:0.116px;">= 12</span></div><span class="t" style="left:1443.20px;top:469px;font-size:10.5px;color:#000;letter-spacing:-0.039px;">12</span><span class="t" style="left:1525.00px;top:469px;font-size:11.5px;color:#000;letter-spacing:0.050px;">Hinge plate thickness</span><div class="b" style="left:954px;top:482px;width:809px;height:1px;background:#6f6f6f;"></div><span class="t" style="left:987.70px;top:485px;font-size:10.5px;color:#000;letter-spacing:0.021px;">"HINGE AXLE"</span><div class="b" style="left:1128px;top:483px;width:312px;height:15px;overflow:hidden"><span class="t" style="left:1.70px;top:2px;font-size:11.0px;color:#000;letter-spacing:0.116px;">= 50</span></div><span class="t" style="left:1443.20px;top:485px;font-size:10.5px;color:#000;letter-spacing:-0.039px;">50</span><span class="t" style="left:1525.00px;top:485px;font-size:11.5px;color:#000;letter-spacing:0.059px;">Axle diameter</span><div class="b" style="left:954px;top:498px;width:809px;height:1px;background:#6f6f6f;"></div><span class="t" style="left:987.70px;top:501px;font-size:10.75px;color:#000;letter-spacing:0.066px;">"HINGE WIDTH"</span><div class="b" style="left:1128px;top:499px;width:312px;height:15px;overflow:hidden"><span class="t" style="left:1.70px;top:2px;font-size:11.0px;color:#000;letter-spacing:0.059px;">= 150</span></div><span class="t" style="left:1443.20px;top:501px;font-size:10.5px;color:#000;letter-spacing:0.011px;">150</span><span class="t" style="left:1525.00px;top:501px;font-size:11.5px;color:#000;letter-spacing:0.052px;">Distance between hinge plates</span><div class="b" style="left:954px;top:514px;width:809px;height:1px;background:#6f6f6f;"></div><span class="t" style="left:987.70px;top:517px;font-size:10.5px;color:#000;letter-spacing:-0.162px;">"HINGE STEP"</span><div class="b" style="left:1128px;top:515px;width:312px;height:15px;overflow:hidden"><span class="t" style="left:1.70px;top:2px;font-size:11.0px;color:#000;letter-spacing:0.022px;">= 1000</span></div><span class="t" style="left:1443.20px;top:517px;font-size:10.5px;color:#000;letter-spacing:0.036px;">1000</span><span class="t" style="left:1525.00px;top:517px;font-size:11.5px;color:#000;letter-spacing:0.026px;">Distance between hinges</span><div class="b" style="left:954px;top:530px;width:809px;height:1px;background:#6f6f6f;"></div><span class="t" style="left:987.70px;top:533px;font-size:11.0px;color:#000;letter-spacing:0.075px;">"PIN DIAM."</span><div class="b" style="left:1128px;top:531px;width:312px;height:15px;overflow:hidden"><span class="t" style="left:1.70px;top:2px;font-size:11.0px;color:#000;letter-spacing:0.116px;">= 40</span></div><span class="t" style="left:1443.20px;top:533px;font-size:10.5px;color:#000;letter-spacing:-0.039px;">40</span><span class="t" style="left:1525.00px;top:533px;font-size:11.5px;color:#000;letter-spacing:0.052px;">Pin diameter</span><div class="b" style="left:954px;top:546px;width:809px;height:1px;background:#6f6f6f;"></div><span class="t" style="left:987.70px;top:549px;font-size:10.5px;color:#000;letter-spacing:-0.081px;">"OFFSET FROM PIN"</span><div class="b" style="left:1128px;top:547px;width:312px;height:15px;overflow:hidden"><span class="t" style="left:1.70px;top:2px;font-size:11.0px;color:#000;letter-spacing:0.116px;">= 15</span></div><span class="t" style="left:1443.20px;top:549px;font-size:10.5px;color:#000;letter-spacing:-0.039px;">15</span><div class="b" style="left:954px;top:562px;width:809px;height:1px;background:#6f6f6f;"></div><span class="t" style="left:987.70px;top:565px;font-size:10.5px;color:#000;letter-spacing:0.118px;">"HINGE QTY."</span><div class="b" style="left:1128px;top:563px;width:312px;height:15px;overflow:hidden"><span class="t" style="left:1.70px;top:2px;font-size:11.25px;color:#000;letter-spacing:0.074px;">= round ( "D5@Sketch26" / (</span><span class="t" style="left:149.12px;top:2px;font-size:10.5px;color:#000;letter-spacing:-0.006px;">"HINGE STEP" ) ) + 0</span></div><span class="t" style="left:1443.20px;top:565px;font-size:10.5px;color:#000;">1</span><span class="t" style="left:1525.00px;top:564px;font-size:11.75px;color:#000;letter-spacing:0.044px;">Number of hinges</span><div class="b" style="left:954px;top:578px;width:809px;height:1px;background:#6f6f6f;"></div><span class="t" style="left:987.70px;top:581px;font-size:10.5px;color:#000;letter-spacing:-0.232px;">"OFFSET FROM EDGE"</span><div class="b" style="left:1128px;top:579px;width:312px;height:15px;overflow:hidden"><span class="t" style="left:1.70px;top:2px;font-size:11.0px;color:#000;letter-spacing:0.059px;">= 500</span></div><span class="t" style="left:1443.20px;top:581px;font-size:10.5px;color:#000;letter-spacing:0.011px;">500</span><div class="b" style="left:954px;top:594px;width:809px;height:1px;background:#6f6f6f;"></div><span class="t" style="left:987.70px;top:597px;font-size:10.5px;color:#000;letter-spacing:-0.049px;">"OUT. TRANSV. STEP"</span><div class="b" style="left:1128px;top:595px;width:312px;height:15px;overflow:hidden"><span class="t" style="left:1.70px;top:2px;font-size:11.0px;color:#000;letter-spacing:0.059px;">= 500</span></div><span class="t" style="left:1443.20px;top:597px;font-size:10.5px;color:#000;letter-spacing:0.011px;">500</span><div class="b" style="left:954px;top:610px;width:809px;height:1px;background:#6f6f6f;"></div><span class="t" style="left:987.70px;top:613px;font-size:10.5px;color:#000;letter-spacing:-0.025px;">"QTY. OUT. TRANSV. STEP"</span><div class="b" style="left:1128px;top:611px;width:312px;height:15px;overflow:hidden"><span class="t" style="left:1.70px;top:2px;font-size:11.25px;color:#000;letter-spacing:0.101px;">= round ( "D1@Sketch38" /</span><span class="t" style="left:142.76px;top:2px;font-size:10.5px;color:#000;letter-spacing:-0.038px;">"OUT. TRANSV. STEP" )</span></div><span class="t" style="left:1443.20px;top:613px;font-size:10.5px;color:#000;">3</span><div class="b" style="left:954px;top:626px;width:809px;height:1px;background:#6f6f6f;"></div><span class="t" style="left:987.70px;top:629px;font-size:10.5px;color:#000;letter-spacing:0.001px;">"OUT. LONG. STEP."</span><div class="b" style="left:1128px;top:627px;width:312px;height:15px;overflow:hidden"><span class="t" style="left:1.70px;top:2px;font-size:11.0px;color:#000;letter-spacing:0.059px;">= 500</span></div><span class="t" style="left:1443.20px;top:629px;font-size:10.5px;color:#000;letter-spacing:0.011px;">500</span><div class="b" style="left:954px;top:642px;width:809px;height:1px;background:#6f6f6f;"></div><span class="t" style="left:987.70px;top:645px;font-size:10.5px;color:#000;letter-spacing:0.015px;">"QTY. OUT. LONG. STEP."</span><div class="b" style="left:1128px;top:643px;width:312px;height:15px;overflow:hidden"><span class="t" style="left:1.70px;top:2px;font-size:11.25px;color:#000;letter-spacing:0.101px;">= round ( "D1@Sketch47" /</span><span class="t" style="left:142.76px;top:2px;font-size:10.5px;color:#000;letter-spacing:0.079px;">"OUT. LONG. STEP." ) + 0</span></div><span class="t" style="left:1443.20px;top:645px;font-size:10.5px;color:#000;">3</span><div class="b" style="left:954px;top:658px;width:809px;height:1px;background:#6f6f6f;"></div><span class="t" style="left:987.70px;top:661px;font-size:10.75px;color:#000;letter-spacing:0.132px;">"SMAL HATCH"</span><div class="b" style="left:1128px;top:659px;width:312px;height:15px;overflow:hidden"><span class="t" style="left:1.70px;top:2px;font-size:11.25px;color:#000;letter-spacing:0.092px;">= 2</span></div><span class="t" style="left:1443.20px;top:661px;font-size:10.5px;color:#000;">2</span><span class="t" style="left:1525.00px;top:661px;font-size:10.5px;color:#000;letter-spacing:0.093px;">YES=1, NO=2</span><div class="b" style="left:954px;top:674px;width:809px;height:1px;background:#6f6f6f;"></div><span class="t" style="left:987.70px;top:677px;font-size:10.75px;color:#000;letter-spacing:0.062px;">"DIM. L. 1"</span><div class="b" style="left:1128px;top:675px;width:312px;height:15px;overflow:hidden"><span class="t" style="left:1.70px;top:2px;font-size:11.0px;color:#000;letter-spacing:0.022px;">= 1800</span></div><span class="t" style="left:1443.20px;top:677px;font-size:10.5px;color:#000;letter-spacing:0.036px;">1800</span><span class="t" style="left:1525.00px;top:677px;font-size:11.5px;color:#000;letter-spacing:0.058px;">Position for 1 small hatch</span><div class="b" style="left:954px;top:690px;width:809px;height:1px;background:#6f6f6f;"></div><span class="t" style="left:987.70px;top:693px;font-size:11.0px;color:#000;letter-spacing:0.105px;">"DIM. W. 1"</span><div class="b" style="left:1128px;top:691px;width:312px;height:15px;overflow:hidden"><span class="t" style="left:1.70px;top:2px;font-size:11.0px;color:#000;letter-spacing:0.059px;">= 400</span></div><span class="t" style="left:1443.20px;top:693px;font-size:10.5px;color:#000;letter-spacing:0.011px;">400</span><span class="t" style="left:1525.00px;top:693px;font-size:11.5px;color:#000;letter-spacing:0.058px;">Position for 1 small hatch</span><div class="b" style="left:954px;top:706px;width:809px;height:1px;background:#6f6f6f;"></div><span class="t" style="left:987.70px;top:709px;font-size:10.5px;color:#000;letter-spacing:-0.059px;">"C.O.W.S.H."</span><div class="b" style="left:1128px;top:707px;width:312px;height:15px;overflow:hidden"><span class="t" style="left:1.70px;top:2px;font-size:11.0px;color:#000;letter-spacing:0.059px;">= 800</span></div><span class="t" style="left:1443.20px;top:709px;font-size:10.5px;color:#000;letter-spacing:0.011px;">800</span><div class="b" style="left:954px;top:722px;width:809px;height:1px;background:#6f6f6f;"></div><span class="t" style="left:987.70px;top:725px;font-size:10.5px;color:#000;letter-spacing:-0.211px;">"C.O.L.S.H."</span><div class="b" style="left:1128px;top:723px;width:312px;height:15px;overflow:hidden"><span class="t" style="left:1.70px;top:2px;font-size:11.0px;color:#000;letter-spacing:0.059px;">= 800</span></div><span class="t" style="left:1443.20px;top:725px;font-size:10.5px;color:#000;letter-spacing:0.011px;">800</span><div class="b" style="left:954px;top:738px;width:809px;height:1px;background:#6f6f6f;"></div><span class="t" style="left:987.70px;top:741px;font-size:10.75px;color:#000;letter-spacing:0.068px;">"SMALL HATCH 2"</span><div class="b" style="left:1128px;top:739px;width:312px;height:15px;overflow:hidden"><span class="t" style="left:1.70px;top:2px;font-size:11.25px;color:#000;letter-spacing:0.092px;">= 2</span></div><span class="t" style="left:1443.20px;top:741px;font-size:10.5px;color:#000;">2</span><span class="t" style="left:1525.00px;top:741px;font-size:10.5px;color:#000;letter-spacing:0.093px;">YES=1, NO=2</span><div class="b" style="left:954px;top:754px;width:809px;height:1px;background:#6f6f6f;"></div><span class="t" style="left:987.70px;top:757px;font-size:10.75px;color:#000;letter-spacing:0.062px;">"DIM. L. 2"</span><div class="b" style="left:1128px;top:755px;width:312px;height:15px;overflow:hidden"><span class="t" style="left:1.70px;top:2px;font-size:11.0px;color:#000;letter-spacing:0.022px;">= 1800</span></div><span class="t" style="left:1443.20px;top:757px;font-size:10.5px;color:#000;letter-spacing:0.036px;">1800</span><span class="t" style="left:1525.00px;top:757px;font-size:11.5px;color:#000;letter-spacing:0.058px;">Position for 2 small hatch</span><div class="b" style="left:954px;top:770px;width:809px;height:1px;background:#6f6f6f;"></div><span class="t" style="left:987.70px;top:773px;font-size:11.0px;color:#000;letter-spacing:0.105px;">"DIM. W. 1"</span><div class="b" style="left:1128px;top:771px;width:312px;height:15px;overflow:hidden"><span class="t" style="left:1.70px;top:2px;font-size:11.0px;color:#000;letter-spacing:0.059px;">= 400</span></div><span class="t" style="left:1443.20px;top:773px;font-size:10.5px;color:#000;letter-spacing:0.011px;">400</span><span class="t" style="left:1525.00px;top:773px;font-size:11.5px;color:#000;letter-spacing:0.058px;">Position for 2 small hatch</span><div class="b" style="left:954px;top:786px;width:809px;height:1px;background:#6f6f6f;"></div><div class="b" style="left:1128px;top:787px;width:635px;height:15px;background:#e6e6e6;"></div><span class="t" style="left:986.60px;top:789px;font-size:11.0px;color:#a8a8a8;letter-spacing:0.054px;font-style:italic;">Add global variable</span><div class="b" style="left:954px;top:802px;width:809px;height:1px;background:#6f6f6f;"></div><div class="b" style="left:955px;top:803px;width:808px;height:19px;background:#e6e6e6;"></div><div class="b" style="left:962px;top:810px;width:9px;height:9px;box-sizing:border-box;border:1px solid #8e8e8e;border-radius:2px;background:linear-gradient(#ffffff,#e4e4e4)"></div><div class="b" style="left:964px;top:814px;width:5px;height:1px;background:#2b62c0;"></div><span class="t" style="left:977.00px;top:809px;font-size:11.75px;color:#000;letter-spacing:-0.535px;font-weight:700;">Features</span><div class="b" style="left:954px;top:822px;width:809px;height:1px;background:#6f6f6f;"></div><span class="t" style="left:987.70px;top:825px;font-size:11.25px;color:#000;letter-spacing:0.033px;">"LPattern6"</span><div class="b" style="left:1128px;top:823px;width:312px;height:15px;overflow:hidden"><span class="t" style="left:1.70px;top:2px;font-size:10.75px;color:#000;letter-spacing:0.087px;">= IIF ( "HINGE QTY." &lt;= 1 ,</span><span class="t" style="left:137.38px;top:2px;font-size:11.25px;color:#000;letter-spacing:0.080px;">"suppressed" , "unsuppressed" )</span></div><span class="t" style="left:1443.20px;top:825px;font-size:11.0px;color:#000;letter-spacing:0.112px;">Suppressed</span><div class="b" style="left:954px;top:838px;width:809px;height:1px;background:#6f6f6f;"></div><span class="t" style="left:987.70px;top:841px;font-size:11.25px;color:#000;letter-spacing:0.033px;">"LPattern7"</span><div class="b" style="left:1128px;top:839px;width:312px;height:15px;overflow:hidden"><span class="t" style="left:1.70px;top:2px;font-size:10.75px;color:#000;letter-spacing:0.087px;">= IIF ( "HINGE QTY." &lt;= 1 ,</span><span class="t" style="left:137.38px;top:2px;font-size:11.25px;color:#000;letter-spacing:0.080px;">"suppressed" , "unsuppressed" )</span></div><span class="t" style="left:1443.20px;top:841px;font-size:11.0px;color:#000;letter-spacing:0.112px;">Suppressed</span><div class="b" style="left:954px;top:854px;width:809px;height:1px;background:#6f6f6f;"></div><span class="t" style="left:987.70px;top:857px;font-size:11.25px;color:#000;letter-spacing:0.029px;">"MINI HATCH"</span><div class="b" style="left:1128px;top:855px;width:312px;height:15px;overflow:hidden"><span class="t" style="left:1.70px;top:2px;font-size:10.75px;color:#000;letter-spacing:0.110px;">= IIF ( "SMAL HATCH" = 1 ,</span><span class="t" style="left:138.96px;top:2px;font-size:11.25px;color:#000;letter-spacing:0.080px;">"unsuppressed" , "suppressed" )</span></div><span class="t" style="left:1443.20px;top:857px;font-size:11.0px;color:#000;letter-spacing:0.112px;">Suppressed</span><span class="t" style="left:1525.00px;top:857px;font-size:11.25px;color:#000;letter-spacing:0.035px;">Supress or unsupress small hatch 1</span><div class="b" style="left:954px;top:870px;width:809px;height:1px;background:#6f6f6f;"></div><span class="t" style="left:987.70px;top:873px;font-size:11.0px;color:#000;letter-spacing:0.126px;">"MINI HATCH 2"</span><div class="b" style="left:1128px;top:871px;width:312px;height:15px;overflow:hidden"><span class="t" style="left:1.70px;top:2px;font-size:10.75px;color:#000;letter-spacing:0.078px;">= IIF ( "SMALL HATCH 2" = 1 ,</span><span class="t" style="left:153.33px;top:2px;font-size:11.25px;color:#000;letter-spacing:0.080px;">"unsuppressed" , "suppressed" )</span></div><span class="t" style="left:1443.20px;top:873px;font-size:11.0px;color:#000;letter-spacing:0.112px;">Suppressed</span><span class="t" style="left:1525.00px;top:873px;font-size:11.25px;color:#000;letter-spacing:0.035px;">Supress or unsupress small hatch 2</span><div class="b" style="left:954px;top:886px;width:809px;height:1px;background:#6f6f6f;"></div><div class="b" style="left:1128px;top:887px;width:635px;height:15px;background:#e6e6e6;"></div><span class="t" style="left:986.60px;top:889px;font-size:10.5px;color:#a8a8a8;letter-spacing:-0.036px;font-style:italic;">Add feature suppression</span><div class="b" style="left:954px;top:902px;width:809px;height:1px;background:#6f6f6f;"></div><div class="b" style="left:955px;top:903px;width:808px;height:19px;background:#e6e6e6;"></div><div class="b" style="left:962px;top:910px;width:9px;height:9px;box-sizing:border-box;border:1px solid #8e8e8e;border-radius:2px;background:linear-gradient(#ffffff,#e4e4e4)"></div><div class="b" style="left:964px;top:914px;width:5px;height:1px;background:#2b62c0;"></div><span class="t" style="left:977.00px;top:909px;font-size:11.75px;color:#000;letter-spacing:-0.400px;font-weight:700;">Equations</span><div class="b" style="left:954px;top:922px;width:809px;height:1px;background:#6f6f6f;"></div><div class="b" style="left:1441px;top:923px;width:81px;height:15px;background:#e6e6e6;"></div><span class="t" style="left:987.70px;top:925px;font-size:11.0px;color:#000;letter-spacing:0.030px;">"D1@Sketch3"</span><div class="b" style="left:1128px;top:923px;width:312px;height:15px;overflow:hidden"><span class="t" style="left:1.70px;top:2px;font-size:10.5px;color:#000;letter-spacing:0.044px;">= "C.O. LENGTH"</span></div><span class="t" style="left:1443.20px;top:925px;font-size:11.25px;color:#000;letter-spacing:0.018px;">2500mm</span><div class="b" style="left:954px;top:938px;width:809px;height:1px;background:#6f6f6f;"></div><div class="b" style="left:1441px;top:939px;width:81px;height:15px;background:#e6e6e6;"></div><span class="t" style="left:987.70px;top:941px;font-size:11.0px;color:#000;letter-spacing:0.030px;">"D8@Sketch3"</span><div class="b" style="left:1128px;top:939px;width:312px;height:15px;overflow:hidden"><span class="t" style="left:1.70px;top:2px;font-size:10.5px;color:#000;letter-spacing:0.113px;">= "H.I.P. DISTANCE"</span></div><span class="t" style="left:1443.20px;top:941px;font-size:11.25px;color:#000;letter-spacing:0.083px;">180mm</span><div class="b" style="left:954px;top:954px;width:809px;height:1px;background:#6f6f6f;"></div><div class="b" style="left:1441px;top:955px;width:81px;height:15px;background:#e6e6e6;"></div><span class="t" style="left:987.70px;top:957px;font-size:11.0px;color:#000;letter-spacing:0.030px;">"D2@Sketch3"</span><div class="b" style="left:1128px;top:955px;width:312px;height:15px;overflow:hidden"><span class="t" style="left:1.70px;top:2px;font-size:11.0px;color:#000;letter-spacing:0.013px;">= "GAP"</span></div><span class="t" style="left:1443.20px;top:957px;font-size:11.5px;color:#000;letter-spacing:0.006px;">40mm</span><div class="b" style="left:954px;top:970px;width:809px;height:1px;background:#6f6f6f;"></div><div class="b" style="left:1127px;top:111px;width:1px;height:860px;background:#6f6f6f;"></div><div class="b" style="left:1440px;top:111px;width:1px;height:860px;background:#6f6f6f;"></div><div class="b" style="left:1522px;top:111px;width:1px;height:860px;background:#6f6f6f;"></div><div class="b" style="left:924px;top:85px;width:30px;height:890px;background:#f0f0f0;"></div><div class="b" style="left:954px;top:111px;width:1px;height:870px;background:#000;"></div><div class="b" style="left:924px;top:130px;width:30px;height:1px;background:#000;"></div><div class="b" style="left:924px;top:131px;width:30px;height:1px;background:#fbfbfb;"></div><div class="b" style="left:924px;top:146px;width:30px;height:1px;background:#000;"></div><div class="b" style="left:924px;top:147px;width:30px;height:1px;background:#fbfbfb;"></div><div class="b" style="left:924px;top:162px;width:30px;height:1px;background:#000;"></div><div class="b" style="left:924px;top:163px;width:30px;height:1px;background:#fbfbfb;"></div><div class="b" style="left:924px;top:178px;width:30px;height:1px;background:#000;"></div><div class="b" style="left:924px;top:179px;width:30px;height:1px;background:#fbfbfb;"></div><div class="b" style="left:924px;top:194px;width:30px;height:1px;background:#000;"></div><div class="b" style="left:924px;top:195px;width:30px;height:1px;background:#fbfbfb;"></div><div class="b" style="left:924px;top:210px;width:30px;height:1px;background:#000;"></div><div class="b" style="left:924px;top:211px;width:30px;height:1px;background:#fbfbfb;"></div><div class="b" style="left:924px;top:226px;width:30px;height:1px;background:#000;"></div><div class="b" style="left:924px;top:227px;width:30px;height:1px;background:#fbfbfb;"></div><div class="b" style="left:924px;top:242px;width:30px;height:1px;background:#000;"></div><div class="b" style="left:924px;top:243px;width:30px;height:1px;background:#fbfbfb;"></div><div class="b" style="left:924px;top:258px;width:30px;height:1px;background:#000;"></div><div class="b" style="left:924px;top:259px;width:30px;height:1px;background:#fbfbfb;"></div><div class="b" style="left:924px;top:274px;width:30px;height:1px;background:#000;"></div><div class="b" style="left:924px;top:275px;width:30px;height:1px;background:#fbfbfb;"></div><div class="b" style="left:924px;top:290px;width:30px;height:1px;background:#000;"></div><div class="b" style="left:924px;top:291px;width:30px;height:1px;background:#fbfbfb;"></div><div class="b" style="left:924px;top:306px;width:30px;height:1px;background:#000;"></div><div class="b" style="left:924px;top:307px;width:30px;height:1px;background:#fbfbfb;"></div><div class="b" style="left:924px;top:322px;width:30px;height:1px;background:#000;"></div><div class="b" style="left:924px;top:323px;width:30px;height:1px;background:#fbfbfb;"></div><div class="b" style="left:924px;top:338px;width:30px;height:1px;background:#000;"></div><div class="b" style="left:924px;top:339px;width:30px;height:1px;background:#fbfbfb;"></div><div class="b" style="left:924px;top:354px;width:30px;height:1px;background:#000;"></div><div class="b" style="left:924px;top:355px;width:30px;height:1px;background:#fbfbfb;"></div><div class="b" style="left:924px;top:370px;width:30px;height:1px;background:#000;"></div><div class="b" style="left:924px;top:371px;width:30px;height:1px;background:#fbfbfb;"></div><div class="b" style="left:924px;top:386px;width:30px;height:1px;background:#000;"></div><div class="b" style="left:924px;top:387px;width:30px;height:1px;background:#fbfbfb;"></div><div class="b" style="left:924px;top:402px;width:30px;height:1px;background:#000;"></div><div class="b" style="left:924px;top:403px;width:30px;height:1px;background:#fbfbfb;"></div><div class="b" style="left:924px;top:418px;width:30px;height:1px;background:#000;"></div><div class="b" style="left:924px;top:419px;width:30px;height:1px;background:#fbfbfb;"></div><div class="b" style="left:924px;top:434px;width:30px;height:1px;background:#000;"></div><div class="b" style="left:924px;top:435px;width:30px;height:1px;background:#fbfbfb;"></div><div class="b" style="left:924px;top:450px;width:30px;height:1px;background:#000;"></div><div class="b" style="left:924px;top:451px;width:30px;height:1px;background:#fbfbfb;"></div><div class="b" style="left:924px;top:466px;width:30px;height:1px;background:#000;"></div><div class="b" style="left:924px;top:467px;width:30px;height:1px;background:#fbfbfb;"></div><div class="b" style="left:924px;top:482px;width:30px;height:1px;background:#000;"></div><div class="b" style="left:924px;top:483px;width:30px;height:1px;background:#fbfbfb;"></div><div class="b" style="left:924px;top:498px;width:30px;height:1px;background:#000;"></div><div class="b" style="left:924px;top:499px;width:30px;height:1px;background:#fbfbfb;"></div><div class="b" style="left:924px;top:514px;width:30px;height:1px;background:#000;"></div><div class="b" style="left:924px;top:515px;width:30px;height:1px;background:#fbfbfb;"></div><div class="b" style="left:924px;top:530px;width:30px;height:1px;background:#000;"></div><div class="b" style="left:924px;top:531px;width:30px;height:1px;background:#fbfbfb;"></div><div class="b" style="left:924px;top:546px;width:30px;height:1px;background:#000;"></div><div class="b" style="left:924px;top:547px;width:30px;height:1px;background:#fbfbfb;"></div><div class="b" style="left:924px;top:562px;width:30px;height:1px;background:#000;"></div><div class="b" style="left:924px;top:563px;width:30px;height:1px;background:#fbfbfb;"></div><div class="b" style="left:924px;top:578px;width:30px;height:1px;background:#000;"></div><div class="b" style="left:924px;top:579px;width:30px;height:1px;background:#fbfbfb;"></div><div class="b" style="left:924px;top:594px;width:30px;height:1px;background:#000;"></div><div class="b" style="left:924px;top:595px;width:30px;height:1px;background:#fbfbfb;"></div><div class="b" style="left:924px;top:610px;width:30px;height:1px;background:#000;"></div><div class="b" style="left:924px;top:611px;width:30px;height:1px;background:#fbfbfb;"></div><div class="b" style="left:924px;top:626px;width:30px;height:1px;background:#000;"></div><div class="b" style="left:924px;top:627px;width:30px;height:1px;background:#fbfbfb;"></div><div class="b" style="left:924px;top:642px;width:30px;height:1px;background:#000;"></div><div class="b" style="left:924px;top:643px;width:30px;height:1px;background:#fbfbfb;"></div><div class="b" style="left:924px;top:658px;width:30px;height:1px;background:#000;"></div><div class="b" style="left:924px;top:659px;width:30px;height:1px;background:#fbfbfb;"></div><div class="b" style="left:924px;top:674px;width:30px;height:1px;background:#000;"></div><div class="b" style="left:924px;top:675px;width:30px;height:1px;background:#fbfbfb;"></div><div class="b" style="left:924px;top:690px;width:30px;height:1px;background:#000;"></div><div class="b" style="left:924px;top:691px;width:30px;height:1px;background:#fbfbfb;"></div><div class="b" style="left:924px;top:706px;width:30px;height:1px;background:#000;"></div><div class="b" style="left:924px;top:707px;width:30px;height:1px;background:#fbfbfb;"></div><div class="b" style="left:924px;top:722px;width:30px;height:1px;background:#000;"></div><div class="b" style="left:924px;top:723px;width:30px;height:1px;background:#fbfbfb;"></div><div class="b" style="left:924px;top:738px;width:30px;height:1px;background:#000;"></div><div class="b" style="left:924px;top:739px;width:30px;height:1px;background:#fbfbfb;"></div><div class="b" style="left:924px;top:754px;width:30px;height:1px;background:#000;"></div><div class="b" style="left:924px;top:755px;width:30px;height:1px;background:#fbfbfb;"></div><div class="b" style="left:924px;top:770px;width:30px;height:1px;background:#000;"></div><div class="b" style="left:924px;top:771px;width:30px;height:1px;background:#fbfbfb;"></div><div class="b" style="left:924px;top:786px;width:30px;height:1px;background:#000;"></div><div class="b" style="left:924px;top:787px;width:30px;height:1px;background:#fbfbfb;"></div><div class="b" style="left:924px;top:802px;width:30px;height:1px;background:#000;"></div><div class="b" style="left:924px;top:803px;width:30px;height:1px;background:#fbfbfb;"></div><div class="b" style="left:924px;top:822px;width:30px;height:1px;background:#000;"></div><div class="b" style="left:924px;top:823px;width:30px;height:1px;background:#fbfbfb;"></div><div class="b" style="left:924px;top:838px;width:30px;height:1px;background:#000;"></div><div class="b" style="left:924px;top:839px;width:30px;height:1px;background:#fbfbfb;"></div><div class="b" style="left:924px;top:854px;width:30px;height:1px;background:#000;"></div><div class="b" style="left:924px;top:855px;width:30px;height:1px;background:#fbfbfb;"></div><div class="b" style="left:924px;top:870px;width:30px;height:1px;background:#000;"></div><div class="b" style="left:924px;top:871px;width:30px;height:1px;background:#fbfbfb;"></div><div class="b" style="left:924px;top:886px;width:30px;height:1px;background:#000;"></div><div class="b" style="left:924px;top:887px;width:30px;height:1px;background:#fbfbfb;"></div><div class="b" style="left:924px;top:902px;width:30px;height:1px;background:#000;"></div><div class="b" style="left:924px;top:903px;width:30px;height:1px;background:#fbfbfb;"></div><div class="b" style="left:924px;top:922px;width:30px;height:1px;background:#000;"></div><div class="b" style="left:924px;top:923px;width:30px;height:1px;background:#fbfbfb;"></div><div class="b" style="left:924px;top:938px;width:30px;height:1px;background:#000;"></div><div class="b" style="left:924px;top:939px;width:30px;height:1px;background:#fbfbfb;"></div><div class="b" style="left:924px;top:954px;width:30px;height:1px;background:#000;"></div><div class="b" style="left:924px;top:955px;width:30px;height:1px;background:#fbfbfb;"></div><div class="b" style="left:924px;top:970px;width:30px;height:1px;background:#000;"></div><div class="b" style="left:924px;top:971px;width:30px;height:1px;background:#fbfbfb;"></div><div class="b" style="left:924px;top:85px;width:31px;height:26px;box-sizing:border-box;border:1px dotted #000;"></div></div>
<div class="b" style="left:1764px;top:85px;width:16px;height:880px;background:#f0f0f0;"></div>
<div class="b" style="left:1764px;top:102px;width:15px;height:362px;background:#c9c9c9;"></div>
<svg class="b" style="left:1764px;top:85px" width="16" height="880" viewBox="0 0 16 880"><path d="M4 11.5L7.5 8L11 11.5" fill="none" stroke="#505050" stroke-width="1.6"/><path d="M4 869L7.5 872.5L11 869" fill="none" stroke="#505050" stroke-width="1.6"/></svg>
<div class="b" style="left:1792px;top:84px;width:76px;height:22px;background:#e1e1e1;box-sizing:border-box;border:2px solid #0078d7;"></div>
<span class="t" style="left:1821.55px;top:89px;font-size:11.75px;color:#000;letter-spacing:0.362px;">OK</span>
<div class="b" style="left:1792px;top:115px;width:76px;height:22px;background:#e1e1e1;box-sizing:border-box;border:1px solid #adadad;"></div>
<span class="t" style="left:1812.55px;top:120px;font-size:11.75px;color:#000;letter-spacing:-0.146px;">Cancel</span>
<div class="b" style="left:1792px;top:146px;width:76px;height:22px;background:#e1e1e1;box-sizing:border-box;border:1px solid #adadad;"></div>
<span class="t" style="left:1808.80px;top:151px;font-size:11.75px;color:#000;letter-spacing:0.012px;">Import...</span>
<div class="b" style="left:1792px;top:176px;width:76px;height:22px;background:#e1e1e1;box-sizing:border-box;border:1px solid #adadad;"></div>
<span class="t" style="left:1809.30px;top:181px;font-size:11.75px;color:#000;letter-spacing:-0.173px;">Export...</span>
<div class="b" style="left:1792px;top:207px;width:76px;height:22px;background:#e1e1e1;box-sizing:border-box;border:1px solid #adadad;"></div>
<span class="t" style="left:1818.05px;top:212px;font-size:11.75px;color:#000;letter-spacing:0.133px;">Help</span>
<div class="b" style="left:925px;top:977px;width:13px;height:13px;background:#fff;box-sizing:border-box;border:1px solid #333;"></div>
<div class="b" style="left:925px;top:1001px;width:13px;height:13px;background:#fff;box-sizing:border-box;border:1px solid #333;"></div>
<span class="t" style="left:941.00px;top:978px;font-size:11.75px;color:#000;letter-spacing:0.061px;">Automatically rebuild</span>
<span class="t" style="left:941.00px;top:1002px;font-size:11.75px;color:#000;letter-spacing:0.007px;">Link to external file:</span>
<div class="b" style="left:1056px;top:970px;width:24px;height:24px;background:#f0f0f0;box-sizing:border-box;border:1px solid #000;"></div>
<span class="t" style="left:1108.00px;top:976px;font-size:11.75px;color:#000;letter-spacing:0.130px;">Angular equation units:</span>
<div class="b" style="left:1237px;top:973px;width:68px;height:21px;background:#e1e1e1;box-sizing:border-box;border:1px solid #adadad;"></div>
<span class="t" style="left:1241.10px;top:977px;font-size:11.75px;color:#000;letter-spacing:-0.273px;">Radians</span>
<svg class="b" style="left:1290px;top:979px" width="12" height="10" viewBox="0 0 12 10"><path d="M1.5 2.5L6 7L10.5 2.5" fill="none" stroke="#333" stroke-width="1.1"/></svg>
<div class="b" style="left:1357px;top:975px;width:13px;height:13px;background:#fff;box-sizing:border-box;border:1px solid #c8c8c8;"></div>
<span class="t" style="left:1373.10px;top:976px;font-size:11.75px;color:#7a8da5;letter-spacing:-0.045px;">Automatic solve order</span>
<svg class="b" style="left:1862px;top:1012px" width="16" height="16" viewBox="0 0 16 16"><g stroke="#2a2a7a" stroke-width="1"><path d="M1 15.5L15.5 1M4.5 15.5L15.5 4.5M8 15.5L15.5 8M11.5 15.5L15.5 11.5"/></g></svg>
<svg class="b" style="left:945px;top:52px" width="24" height="24" viewBox="0 0 24 24"><path d="M3 3H18.5V8.4H16.4V5.4H7.2L13.4 12.4L6.2 20.2H13" fill="none" stroke="#a9a5b8" stroke-width="1.9" stroke-linejoin="miter"/><path d="M12 18.4C14.2 13.799999999999999 20.8 13.799999999999999 23 18.4C20.8 23.0 14.2 23.0 12 18.4Z" fill="#fff" stroke="#111" stroke-width="1"/><circle cx="17.5" cy="18.099999999999998" r="3" fill="#111"/><circle cx="16.6" cy="17.099999999999998" r="0.9" fill="#fff"/></svg>
<svg class="b" style="left:972px;top:52px" width="24" height="24" viewBox="0 0 24 24"><g stroke="#e3e4ee" stroke-width="0.8"><path d="M3 7.5H21M3 12.5H21M3 17.5H21M9 3V21M14 3V21M19 3V21"/></g><path d="M4 4.5V16C4 19 6 20.5 9 20.5H12" fill="none" stroke="#1b6fd0" stroke-width="1.7"/><path d="M4 4.5H16.5" stroke="#1b6fd0" stroke-width="1.7" stroke-dasharray="1.4 0.7"/><path d="M12 18.4C14.2 13.799999999999999 20.8 13.799999999999999 23 18.4C20.8 23.0 14.2 23.0 12 18.4Z" fill="#fff" stroke="#111" stroke-width="1"/><circle cx="17.5" cy="18.099999999999998" r="3" fill="#111"/><circle cx="16.6" cy="17.099999999999998" r="0.9" fill="#fff"/></svg>
<svg class="b" style="left:999px;top:52px" width="24" height="24" viewBox="0 0 24 24"><g transform="rotate(-40 11 10)"><rect x="3.5" y="5" width="14" height="9" fill="#f4f4f4" stroke="#111" stroke-width="1.3"/><path d="M5.5 5.5v3M8 5.5v2M10.5 5.5v3M13 5.5v2M15.5 5.5v3" stroke="#111" stroke-width="1"/><rect x="3.5" y="12.4" width="14" height="2" fill="#1b6fd0"/></g><path d="M12 18.4C14.2 13.799999999999999 20.8 13.799999999999999 23 18.4C20.8 23.0 14.2 23.0 12 18.4Z" fill="#fff" stroke="#111" stroke-width="1"/><circle cx="17.5" cy="18.099999999999998" r="3" fill="#111"/><circle cx="16.6" cy="17.099999999999998" r="0.9" fill="#fff"/></svg>
<svg class="b" style="left:1026px;top:52px" width="24" height="24" viewBox="0 0 24 24"><path d="M4.5 5L6.5 3.5V10.5M4.5 10.8H8.8" fill="none" stroke="#111" stroke-width="1.6"/><path d="M4.2 14.5C4.5 12.6 8.4 12.6 8.2 15C8 16.8 5 18.2 4.2 20.4H8.8" fill="none" stroke="#111" stroke-width="1.6"/><path d="M15 3V10.5" stroke="#111" stroke-width="1.8"/><path d="M11.6 8L15 12L18.4 8Z" fill="#111"/><path d="M11.4 18.4C13.600000000000001 13.799999999999999 20.200000000000003 13.799999999999999 22.4 18.4C20.200000000000003 23.0 13.600000000000001 23.0 11.4 18.4Z" fill="#fff" stroke="#111" stroke-width="1"/><circle cx="16.9" cy="18.099999999999998" r="3" fill="#111"/><circle cx="16.0" cy="17.099999999999998" r="0.9" fill="#fff"/></svg>
<svg class="b" style="left:1067px;top:58px" width="13" height="13" viewBox="0 0 13 13"><path d="M0.8 1H11.8L7.8 5.6V11.6H4.8V5.6Z" fill="#6ab0ea" stroke="#1a2a9a" stroke-width="1.2" stroke-linejoin="round"/><path d="M2.6 2.2H10" stroke="#d8ecff" stroke-width="1"/></svg>
<svg class="b" style="left:1248px;top:57px" width="18" height="15" viewBox="0 0 18 15"><path d="M1 0.8V6.5H6.8L4.6 4.3C7.6 2.6 11.6 4 12.2 7.6C12.5 9.6 11.4 11.6 10 13L11.6 14.2C14 12 15.6 9.4 15 6.6C14 2 7.6 0.6 3.2 3Z" fill="#d6d6d6" stroke="#a6a6a6" stroke-width="0.9"/></svg>
<svg class="b" style="left:1275px;top:57px" width="18" height="15" viewBox="0 0 18 15"><path d="M17 0.8V6.5H11.2L13.4 4.3C10.4 2.6 6.4 4 5.8 7.6C5.5 9.6 6.6 11.6 8 13L6.4 14.2C4 12 2.4 9.4 3 6.6C4 2 10.4 0.6 14.8 3Z" fill="#d6d6d6" stroke="#a6a6a6" stroke-width="0.9"/></svg>
<svg class="b" style="left:1056px;top:970px" width="24" height="24" viewBox="0 0 24 24"><rect x="7.2" y="3" width="9.6" height="17.6" rx="4.8" fill="#2a2a2a" stroke="#555" stroke-width="0.8"/><circle cx="12" cy="8" r="2.8" fill="#9a2a10"/><circle cx="12" cy="15.8" r="2.8" fill="#1a6a20"/><path d="M12 6.6l0.5 1h1l-0.8 0.7l0.3 1l-1-0.6l-1 0.6l0.3-1l-0.8-0.7h1z" fill="#e8a050"/><path d="M12 14.4l0.5 1h1l-0.8 0.7l0.3 1l-1-0.6l-1 0.6l0.3-1l-0.8-0.7h1z" fill="#7ad07a"/></svg>
</body></html>
